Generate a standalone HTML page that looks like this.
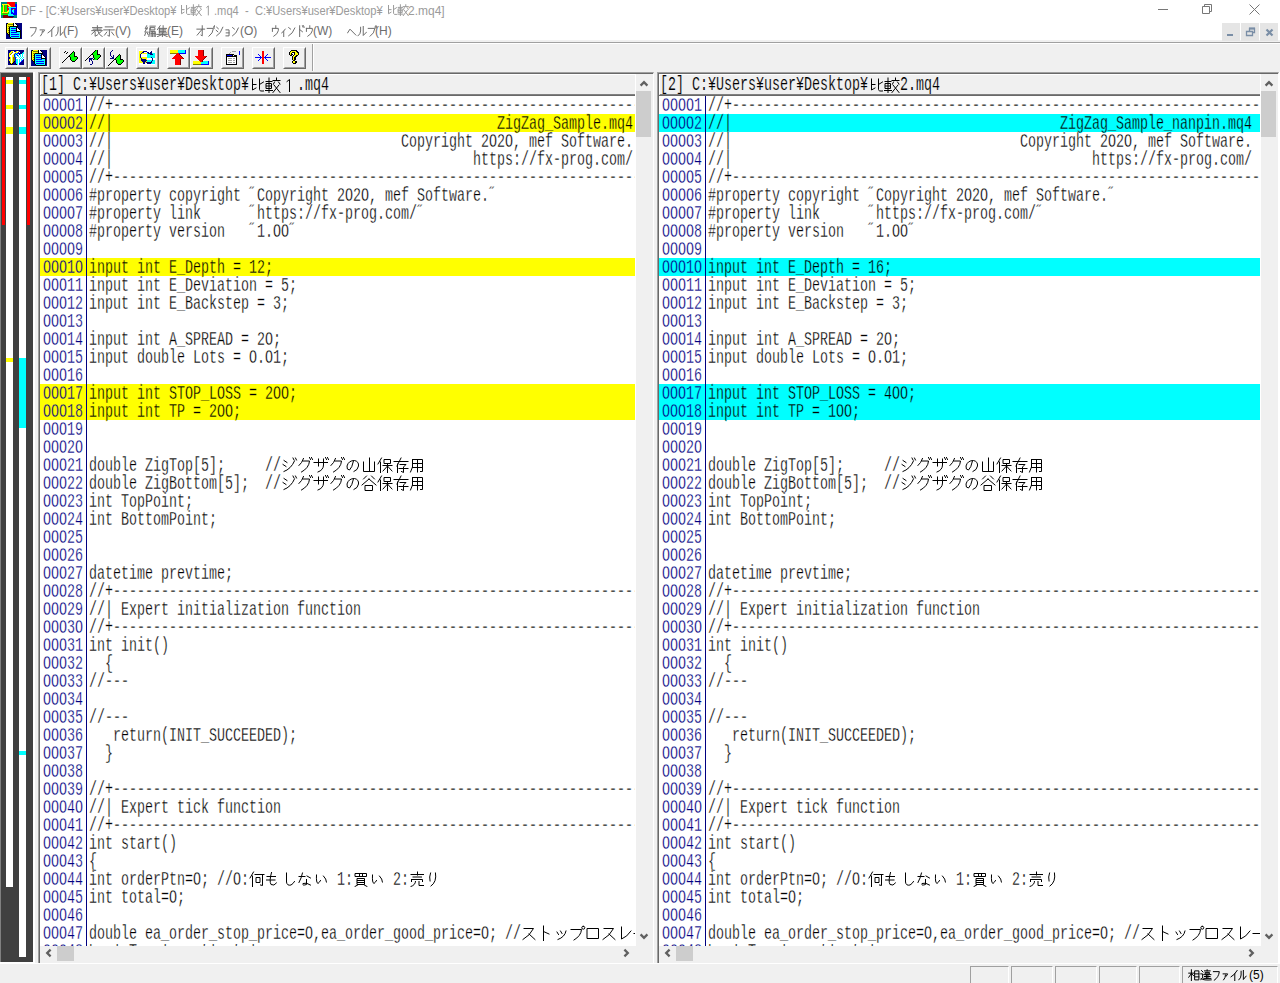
<!DOCTYPE html><html><head><meta charset="utf-8"><title>DF</title><style>
*{box-sizing:border-box}
html,body{margin:0;padding:0;width:1280px;height:983px;overflow:hidden;background:#f0f0f0;position:relative;font-family:"Liberation Sans",sans-serif}
.a{position:absolute;display:block}
.mono{font-family:"Liberation Mono",monospace;font-size:20px;line-height:18px;white-space:pre;transform-origin:0 0;transform:scaleX(0.666667)}
.ui{font-family:"Liberation Sans",sans-serif;font-size:12px;line-height:14px;white-space:pre}
.btn{position:absolute;top:47px;width:23px;height:22px;border-style:solid;border-width:1px;border-color:#fff #696969 #696969 #fff}
.btn:after{content:"";position:absolute;left:0;top:0;right:0;bottom:0;border-style:solid;border-width:1px;border-color:#f0f0f0 #a0a0a0 #a0a0a0 #f0f0f0}
.btn svg{position:absolute;left:2px;top:2px}
svg path{vector-effect:non-scaling-stroke}
</style></head><body>
<div class="a" style="left:0;top:0;width:1280px;height:40px;background:#fff"></div>
<svg class="a" style="left:1px;top:2px" width="16" height="16" viewBox="0 0 16 16" shape-rendering="crispEdges"><rect x="0" y="0" width="6" height="1" fill="#008080"/><rect x="6" y="0" width="8" height="1" fill="#f00"/><rect x="14" y="0" width="2" height="1" fill="#008080"/><rect x="0" y="1" width="6" height="1" fill="#008080"/><rect x="6" y="1" width="8" height="1" fill="#f00"/><rect x="14" y="1" width="2" height="1" fill="#008080"/><rect x="0" y="2" width="1" height="1" fill="#008080"/><rect x="1" y="2" width="7" height="1" fill="#ff0"/><rect x="8" y="2" width="6" height="1" fill="#f00"/><rect x="14" y="2" width="2" height="1" fill="#00f"/><rect x="0" y="3" width="1" height="1" fill="#008080"/><rect x="1" y="3" width="1" height="1" fill="#0f0"/><rect x="2" y="3" width="1" height="1" fill="#ff0"/><rect x="3" y="3" width="1" height="1" fill="#808000"/><rect x="4" y="3" width="2" height="1" fill="#0f0"/><rect x="6" y="3" width="1" height="1" fill="#f00"/><rect x="7" y="3" width="2" height="1" fill="#ff0"/><rect x="9" y="3" width="5" height="1" fill="#f00"/><rect x="14" y="3" width="2" height="1" fill="#00f"/><rect x="0" y="4" width="1" height="1" fill="#008080"/><rect x="1" y="4" width="1" height="1" fill="#0f0"/><rect x="2" y="4" width="1" height="1" fill="#ff0"/><rect x="3" y="4" width="1" height="1" fill="#808000"/><rect x="4" y="4" width="2" height="1" fill="#0f0"/><rect x="6" y="4" width="2" height="1" fill="#f00"/><rect x="8" y="4" width="2" height="1" fill="#ff0"/><rect x="10" y="4" width="4" height="1" fill="#f00"/><rect x="14" y="4" width="2" height="1" fill="#00f"/><rect x="0" y="5" width="2" height="1" fill="#0f0"/><rect x="2" y="5" width="1" height="1" fill="#ff0"/><rect x="3" y="5" width="1" height="1" fill="#808000"/><rect x="4" y="5" width="2" height="1" fill="#0f0"/><rect x="6" y="5" width="1" height="1" fill="#f00"/><rect x="7" y="5" width="8" height="1" fill="#0ff"/><rect x="15" y="5" width="1" height="1" fill="#00f"/><rect x="0" y="6" width="2" height="1" fill="#0f0"/><rect x="2" y="6" width="1" height="1" fill="#ff0"/><rect x="3" y="6" width="1" height="1" fill="#808000"/><rect x="4" y="6" width="2" height="1" fill="#0f0"/><rect x="6" y="6" width="2" height="1" fill="#f00"/><rect x="8" y="6" width="2" height="1" fill="#0ff"/><rect x="10" y="6" width="6" height="1" fill="#00f"/><rect x="0" y="7" width="2" height="1" fill="#0f0"/><rect x="2" y="7" width="1" height="1" fill="#ff0"/><rect x="3" y="7" width="1" height="1" fill="#808000"/><rect x="4" y="7" width="2" height="1" fill="#0f0"/><rect x="6" y="7" width="2" height="1" fill="#f00"/><rect x="8" y="7" width="2" height="1" fill="#0ff"/><rect x="10" y="7" width="1" height="1" fill="#00f"/><rect x="11" y="7" width="1" height="1" fill="#f00"/><rect x="12" y="7" width="1" height="1" fill="#0ff"/><rect x="13" y="7" width="1" height="1" fill="#f00"/><rect x="14" y="7" width="2" height="1" fill="#00f"/><rect x="0" y="8" width="2" height="1" fill="#0f0"/><rect x="2" y="8" width="1" height="1" fill="#ff0"/><rect x="3" y="8" width="1" height="1" fill="#808000"/><rect x="4" y="8" width="2" height="1" fill="#0f0"/><rect x="6" y="8" width="1" height="1" fill="#f00"/><rect x="7" y="8" width="1" height="1" fill="#ff0"/><rect x="8" y="8" width="2" height="1" fill="#0ff"/><rect x="10" y="8" width="1" height="1" fill="#00f"/><rect x="11" y="8" width="2" height="1" fill="#0ff"/><rect x="13" y="8" width="3" height="1" fill="#00f"/><rect x="0" y="9" width="2" height="1" fill="#0f0"/><rect x="2" y="9" width="1" height="1" fill="#ff0"/><rect x="3" y="9" width="1" height="1" fill="#808000"/><rect x="4" y="9" width="2" height="1" fill="#0f0"/><rect x="6" y="9" width="2" height="1" fill="#ff0"/><rect x="8" y="9" width="2" height="1" fill="#0ff"/><rect x="10" y="9" width="1" height="1" fill="#00f"/><rect x="11" y="9" width="2" height="1" fill="#0ff"/><rect x="13" y="9" width="3" height="1" fill="#00f"/><rect x="0" y="10" width="1" height="1" fill="#0f0"/><rect x="1" y="10" width="6" height="1" fill="#ff0"/><rect x="7" y="10" width="1" height="1" fill="#0f0"/><rect x="8" y="10" width="2" height="1" fill="#0ff"/><rect x="10" y="10" width="2" height="1" fill="#00f"/><rect x="12" y="10" width="1" height="1" fill="#0ff"/><rect x="13" y="10" width="3" height="1" fill="#00f"/><rect x="0" y="11" width="2" height="1" fill="#0f0"/><rect x="2" y="11" width="5" height="1" fill="#808000"/><rect x="7" y="11" width="1" height="1" fill="#0f0"/><rect x="8" y="11" width="2" height="1" fill="#0ff"/><rect x="10" y="11" width="6" height="1" fill="#00f"/><rect x="0" y="12" width="7" height="1" fill="#0f0"/><rect x="7" y="12" width="5" height="1" fill="#0ff"/><rect x="12" y="12" width="4" height="1" fill="#00f"/><rect x="0" y="13" width="2" height="1" fill="#008080"/><rect x="2" y="13" width="5" height="1" fill="#800000"/><rect x="7" y="13" width="6" height="1" fill="#0ff"/><rect x="13" y="13" width="3" height="1" fill="#008080"/><rect x="0" y="14" width="2" height="1" fill="#008080"/><rect x="2" y="14" width="6" height="1" fill="#800000"/><rect x="8" y="14" width="5" height="1" fill="#000080"/><rect x="13" y="14" width="3" height="1" fill="#008080"/><rect x="0" y="15" width="2" height="1" fill="#008080"/><rect x="2" y="15" width="10" height="1" fill="#800000"/><rect x="12" y="15" width="4" height="1" fill="#008080"/></svg>
<div class="a ui" style="left:21px;top:4px;color:#9b9b9b;transform:scaleX(0.929);transform-origin:0 0">DF - [C:¥Users¥user¥Desktop¥</div>
<svg class="a" style="left:178.5px;top:4px;" width="23.0" height="12" viewBox="0 0 32 16" preserveAspectRatio="none"><g fill="none" stroke="#9b9b9b" stroke-width="1" stroke-linecap="square" vector-effect="non-scaling-stroke"><path transform="translate(0 0)" d="M3.5 2V13L7 11M3.5 7.5H7M10.5 2V12.5Q10.5 14.5 14.5 14M10.5 7.5L14.5 5"/><path transform="translate(16 0)" d="M4 1V15.5M1 4.5H7M1.5 6.5H6.5V11.5H1.5ZM1.5 9H6.5M0.5 13.5H7.5M11.5 1V3M8 3.5H15M9.5 5L8.5 7M13.5 5L15 7M9 8L15 15.5M14 8L8 15.5"/></g></svg>
<svg class="a" style="left:203px;top:4px;" width="10" height="12" viewBox="0 0 16 16" preserveAspectRatio="none"><g fill="none" stroke="#9b9b9b" stroke-width="1" stroke-linecap="square" vector-effect="non-scaling-stroke"><path transform="translate(0 0)" d="M6 4.5L8.5 2.5V14.5"/></g></svg>
<div class="a ui" style="left:213.7px;top:4px;color:#9b9b9b;transform:scaleX(0.930);transform-origin:0 0">.mq4  -  C:¥Users¥user¥Desktop¥</div>
<svg class="a" style="left:385.5px;top:4px;" width="23.0" height="12" viewBox="0 0 32 16" preserveAspectRatio="none"><g fill="none" stroke="#9b9b9b" stroke-width="1" stroke-linecap="square" vector-effect="non-scaling-stroke"><path transform="translate(0 0)" d="M3.5 2V13L7 11M3.5 7.5H7M10.5 2V12.5Q10.5 14.5 14.5 14M10.5 7.5L14.5 5"/><path transform="translate(16 0)" d="M4 1V15.5M1 4.5H7M1.5 6.5H6.5V11.5H1.5ZM1.5 9H6.5M0.5 13.5H7.5M11.5 1V3M8 3.5H15M9.5 5L8.5 7M13.5 5L15 7M9 8L15 15.5M14 8L8 15.5"/></g></svg>
<div class="a ui" style="left:408px;top:4px;color:#9b9b9b">2.mq4]</div>
<div class="a" style="left:1158px;top:9px;width:10px;height:1px;background:#777"></div>
<svg class="a" style="left:1202px;top:4px" width="11" height="10" viewBox="0 0 11 10"><path d="M0.5 2.5h7v7h-7z M2.5 2.5v-2h7v7h-2" fill="none" stroke="#777" stroke-width="1"/></svg>
<svg class="a" style="left:1249px;top:4px" width="11" height="11" viewBox="0 0 11 11"><path d="M0.5 0.5L10.5 10.5M10.5 0.5L0.5 10.5" fill="none" stroke="#777" stroke-width="1"/></svg>
<svg class="a" style="left:6px;top:23px" width="16" height="16" viewBox="0 0 16 16" shape-rendering="crispEdges"><rect x="0" y="0" width="1" height="1" fill="#000080"/><rect x="1" y="0" width="1" height="1" fill="#000"/><rect x="2" y="0" width="5" height="1" fill="#ff0"/><rect x="7" y="0" width="1" height="1" fill="#000"/><rect x="8" y="0" width="1" height="1" fill="#fff"/><rect x="9" y="0" width="1" height="1" fill="#000"/><rect x="10" y="0" width="6" height="1" fill="#000080"/><rect x="0" y="1" width="1" height="1" fill="#000"/><rect x="1" y="1" width="1" height="1" fill="#ff0"/><rect x="2" y="1" width="5" height="1" fill="#808000"/><rect x="7" y="1" width="1" height="1" fill="#000"/><rect x="8" y="1" width="2" height="1" fill="#fff"/><rect x="10" y="1" width="1" height="1" fill="#000"/><rect x="11" y="1" width="5" height="1" fill="#000080"/><rect x="0" y="2" width="1" height="1" fill="#000"/><rect x="1" y="2" width="6" height="1" fill="#ff0"/><rect x="7" y="2" width="1" height="1" fill="#000"/><rect x="8" y="2" width="3" height="1" fill="#fff"/><rect x="11" y="2" width="1" height="1" fill="#000"/><rect x="12" y="2" width="4" height="1" fill="#000080"/><rect x="0" y="3" width="1" height="1" fill="#000"/><rect x="1" y="3" width="1" height="1" fill="#ff0"/><rect x="2" y="3" width="2" height="1" fill="#808000"/><rect x="4" y="3" width="8" height="1" fill="#000"/><rect x="12" y="3" width="4" height="1" fill="#000080"/><rect x="0" y="4" width="1" height="1" fill="#000"/><rect x="1" y="4" width="2" height="1" fill="#ff0"/><rect x="3" y="4" width="1" height="1" fill="#000"/><rect x="4" y="4" width="6" height="1" fill="#0ff"/><rect x="10" y="4" width="1" height="1" fill="#000"/><rect x="11" y="4" width="5" height="1" fill="#000080"/><rect x="0" y="5" width="1" height="1" fill="#000"/><rect x="1" y="5" width="1" height="1" fill="#ff0"/><rect x="2" y="5" width="1" height="1" fill="#808000"/><rect x="3" y="5" width="1" height="1" fill="#000"/><rect x="4" y="5" width="1" height="1" fill="#0ff"/><rect x="5" y="5" width="5" height="1" fill="#00f"/><rect x="10" y="5" width="1" height="1" fill="#000"/><rect x="11" y="5" width="1" height="1" fill="#fff"/><rect x="12" y="5" width="1" height="1" fill="#000"/><rect x="13" y="5" width="3" height="1" fill="#000080"/><rect x="0" y="6" width="1" height="1" fill="#000"/><rect x="1" y="6" width="2" height="1" fill="#ff0"/><rect x="3" y="6" width="1" height="1" fill="#000"/><rect x="4" y="6" width="6" height="1" fill="#0ff"/><rect x="10" y="6" width="1" height="1" fill="#000"/><rect x="11" y="6" width="2" height="1" fill="#fff"/><rect x="13" y="6" width="1" height="1" fill="#000"/><rect x="14" y="6" width="2" height="1" fill="#000080"/><rect x="0" y="7" width="1" height="1" fill="#000"/><rect x="1" y="7" width="1" height="1" fill="#ff0"/><rect x="2" y="7" width="1" height="1" fill="#808000"/><rect x="3" y="7" width="1" height="1" fill="#000"/><rect x="4" y="7" width="1" height="1" fill="#0ff"/><rect x="5" y="7" width="5" height="1" fill="#00f"/><rect x="10" y="7" width="1" height="1" fill="#000"/><rect x="11" y="7" width="3" height="1" fill="#fff"/><rect x="14" y="7" width="1" height="1" fill="#000"/><rect x="15" y="7" width="1" height="1" fill="#000080"/><rect x="0" y="8" width="1" height="1" fill="#000"/><rect x="1" y="8" width="2" height="1" fill="#ff0"/><rect x="3" y="8" width="1" height="1" fill="#000"/><rect x="4" y="8" width="6" height="1" fill="#0ff"/><rect x="10" y="8" width="5" height="1" fill="#000"/><rect x="15" y="8" width="1" height="1" fill="#000080"/><rect x="0" y="9" width="1" height="1" fill="#000"/><rect x="1" y="9" width="1" height="1" fill="#ff0"/><rect x="2" y="9" width="1" height="1" fill="#808000"/><rect x="3" y="9" width="1" height="1" fill="#000"/><rect x="4" y="9" width="1" height="1" fill="#0ff"/><rect x="5" y="9" width="6" height="1" fill="#00f"/><rect x="11" y="9" width="3" height="1" fill="#0ff"/><rect x="14" y="9" width="1" height="1" fill="#000"/><rect x="15" y="9" width="1" height="1" fill="#000080"/><rect x="0" y="10" width="1" height="1" fill="#000080"/><rect x="1" y="10" width="1" height="1" fill="#000"/><rect x="2" y="10" width="1" height="1" fill="#ff0"/><rect x="3" y="10" width="1" height="1" fill="#000"/><rect x="4" y="10" width="10" height="1" fill="#0ff"/><rect x="14" y="10" width="1" height="1" fill="#000"/><rect x="15" y="10" width="1" height="1" fill="#000080"/><rect x="0" y="11" width="2" height="1" fill="#000080"/><rect x="2" y="11" width="2" height="1" fill="#000"/><rect x="4" y="11" width="1" height="1" fill="#0ff"/><rect x="5" y="11" width="8" height="1" fill="#00f"/><rect x="13" y="11" width="1" height="1" fill="#0ff"/><rect x="14" y="11" width="1" height="1" fill="#000"/><rect x="15" y="11" width="1" height="1" fill="#000080"/><rect x="0" y="12" width="3" height="1" fill="#000080"/><rect x="3" y="12" width="1" height="1" fill="#000"/><rect x="4" y="12" width="10" height="1" fill="#0ff"/><rect x="14" y="12" width="1" height="1" fill="#000"/><rect x="15" y="12" width="1" height="1" fill="#000080"/><rect x="0" y="13" width="3" height="1" fill="#000080"/><rect x="3" y="13" width="1" height="1" fill="#000"/><rect x="4" y="13" width="1" height="1" fill="#0ff"/><rect x="5" y="13" width="8" height="1" fill="#00f"/><rect x="13" y="13" width="1" height="1" fill="#0ff"/><rect x="14" y="13" width="1" height="1" fill="#000"/><rect x="15" y="13" width="1" height="1" fill="#000080"/><rect x="0" y="14" width="4" height="1" fill="#000080"/><rect x="4" y="14" width="1" height="1" fill="#000"/><rect x="5" y="14" width="9" height="1" fill="#0ff"/><rect x="14" y="14" width="1" height="1" fill="#000"/><rect x="15" y="14" width="1" height="1" fill="#000080"/><rect x="0" y="15" width="5" height="1" fill="#000080"/><rect x="5" y="15" width="9" height="1" fill="#000"/><rect x="14" y="15" width="2" height="1" fill="#000080"/></svg>
<svg class="a" style="left:29px;top:25px;" width="9" height="12" viewBox="0 0 16 16" preserveAspectRatio="none"><g fill="none" stroke="#6d6d6d" stroke-width="1" stroke-linecap="square" vector-effect="non-scaling-stroke"><path transform="translate(0 0)" d="M2.5 3.5H13Q12 11 4 15"/></g></svg>
<svg class="a" style="left:38px;top:25px;" width="8.5" height="12" viewBox="0 0 16 16" preserveAspectRatio="none"><g fill="none" stroke="#6d6d6d" stroke-width="1" stroke-linecap="square" vector-effect="non-scaling-stroke"><path transform="translate(0 0)" d="M4 6.5H12.5L10 9.5M8.5 8Q8.5 12 5 14.5"/></g></svg>
<svg class="a" style="left:46.5px;top:25px;" width="8.5" height="12" viewBox="0 0 16 16" preserveAspectRatio="none"><g fill="none" stroke="#6d6d6d" stroke-width="1" stroke-linecap="square" vector-effect="non-scaling-stroke"><path transform="translate(0 0)" d="M13.5 2Q8.5 8 2 10.5M9 6.5V15.5"/></g></svg>
<svg class="a" style="left:55.0px;top:25px;" width="9" height="12" viewBox="0 0 16 16" preserveAspectRatio="none"><g fill="none" stroke="#6d6d6d" stroke-width="1" stroke-linecap="square" vector-effect="non-scaling-stroke"><path transform="translate(0 0)" d="M5.5 3V8Q5.5 12 1.5 14.5M9.5 2V14L14.5 9.5"/></g></svg>
<div class="a ui" style="left:63px;top:24px;color:#6d6d6d">(F)</div>
<svg class="a" style="left:91px;top:25px;" width="12" height="12" viewBox="0 0 16 16" preserveAspectRatio="none"><g fill="none" stroke="#6d6d6d" stroke-width="1" stroke-linecap="square" vector-effect="non-scaling-stroke"><path transform="translate(0 0)" d="M8.5 1V7M2 3.5H14.5M3 5.5H13.5M1 7.5H15M6 7.5L1 12M5.5 9.5V15L9 13M9 8Q10 13 15 15.5M13.5 9L10.5 11"/></g></svg>
<svg class="a" style="left:103px;top:25px;" width="12" height="12" viewBox="0 0 16 16" preserveAspectRatio="none"><g fill="none" stroke="#6d6d6d" stroke-width="1" stroke-linecap="square" vector-effect="non-scaling-stroke"><path transform="translate(0 0)" d="M3 2.5H13M1 6.5H15M8.5 6.5V15L6.5 14M5 9.5L2 13.5M11.5 9.5L14.5 13.5"/></g></svg>
<div class="a ui" style="left:115px;top:24px;color:#6d6d6d">(V)</div>
<svg class="a" style="left:144px;top:25px;" width="12" height="12" viewBox="0 0 16 16" preserveAspectRatio="none"><g fill="none" stroke="#6d6d6d" stroke-width="1" stroke-linecap="square" vector-effect="non-scaling-stroke"><path transform="translate(0 0)" d="M3.5 1L1.5 5H4.5M4.5 3L1 9.5H5.5M2 11L1 14M4.5 11L5.5 13M8 1.5H15M8.5 3.5H14.5V6.5H8.5ZM8.5 3.5L6.5 15.5M9.5 8.5H15V15.5M9.5 8.5V15.5M11.5 8.5V15.5M13.5 8.5V15.5M9.5 11.5H15"/></g></svg>
<svg class="a" style="left:156px;top:25px;" width="12" height="12" viewBox="0 0 16 16" preserveAspectRatio="none"><g fill="none" stroke="#6d6d6d" stroke-width="1" stroke-linecap="square" vector-effect="non-scaling-stroke"><path transform="translate(0 0)" d="M5.5 1L2 6M4.5 4V10.5M4.5 4.5H14M4.5 6.5H13M4.5 8.5H13M4.5 10.5H14M9.5 1V10.5M1 12.5H15M8.5 10.5V15.5M8.5 12.5L2 15.5M8.5 12.5L15 15.5"/></g></svg>
<div class="a ui" style="left:167px;top:24px;color:#6d6d6d">(E)</div>
<svg class="a" style="left:196px;top:25px;" width="9.5" height="12" viewBox="0 0 16 16" preserveAspectRatio="none"><g fill="none" stroke="#6d6d6d" stroke-width="1" stroke-linecap="square" vector-effect="non-scaling-stroke"><path transform="translate(0 0)" d="M1.5 5.5H14.5M10.5 1V14.5L8.5 13.5M10.5 5.5L2 13.5"/></g></svg>
<svg class="a" style="left:205.5px;top:25px;" width="9.5" height="12" viewBox="0 0 16 16" preserveAspectRatio="none"><g fill="none" stroke="#6d6d6d" stroke-width="1" stroke-linecap="square" vector-effect="non-scaling-stroke"><path transform="translate(0 0)" d="M2 4.5H12.5Q12 11 5 15M14.3 1.2A1.5 1.5 0 1 0 14.3 4.2A1.5 1.5 0 1 0 14.3 1.2"/></g></svg>
<svg class="a" style="left:215.0px;top:25px;" width="9" height="12" viewBox="0 0 16 16" preserveAspectRatio="none"><g fill="none" stroke="#6d6d6d" stroke-width="1" stroke-linecap="square" vector-effect="non-scaling-stroke"><path transform="translate(0 0)" d="M3 3L6 5M2 7L5 9M3 14.5Q10 12 14 3"/></g></svg>
<svg class="a" style="left:224.0px;top:25px;" width="7" height="12" viewBox="0 0 16 16" preserveAspectRatio="none"><g fill="none" stroke="#6d6d6d" stroke-width="1" stroke-linecap="square" vector-effect="non-scaling-stroke"><path transform="translate(0 0)" d="M4.5 6.5H11.5V14.5H4.5M5 10.5H11.5"/></g></svg>
<svg class="a" style="left:231.0px;top:25px;" width="8.5" height="12" viewBox="0 0 16 16" preserveAspectRatio="none"><g fill="none" stroke="#6d6d6d" stroke-width="1" stroke-linecap="square" vector-effect="non-scaling-stroke"><path transform="translate(0 0)" d="M3 3.5L6.5 5.5M3 14.5Q10 12 14 4"/></g></svg>
<div class="a ui" style="left:240px;top:24px;color:#6d6d6d">(O)</div>
<svg class="a" style="left:271px;top:25px;" width="9" height="12" viewBox="0 0 16 16" preserveAspectRatio="none"><g fill="none" stroke="#6d6d6d" stroke-width="1" stroke-linecap="square" vector-effect="non-scaling-stroke"><path transform="translate(0 0)" d="M8.5 1V4M2.5 4.5H13V7.5Q12 12 5 15M2.5 4.5V8.5"/></g></svg>
<svg class="a" style="left:280px;top:25px;" width="7" height="12" viewBox="0 0 16 16" preserveAspectRatio="none"><g fill="none" stroke="#6d6d6d" stroke-width="1" stroke-linecap="square" vector-effect="non-scaling-stroke"><path transform="translate(0 0)" d="M12 5.5Q8 9 4 10.5M8.5 8.5V15.5"/></g></svg>
<svg class="a" style="left:287px;top:25px;" width="9" height="12" viewBox="0 0 16 16" preserveAspectRatio="none"><g fill="none" stroke="#6d6d6d" stroke-width="1" stroke-linecap="square" vector-effect="non-scaling-stroke"><path transform="translate(0 0)" d="M3 3.5L6.5 5.5M3 14.5Q10 12 14 4"/></g></svg>
<svg class="a" style="left:296px;top:25px;" width="9" height="12" viewBox="0 0 16 16" preserveAspectRatio="none"><g fill="none" stroke="#6d6d6d" stroke-width="1" stroke-linecap="square" vector-effect="non-scaling-stroke"><path transform="translate(0 0)" d="M6.5 1V15.5M6.5 6L11.5 9M11.5 1L12.5 3M13.5 1L14.5 3"/></g></svg>
<svg class="a" style="left:305px;top:25px;" width="9" height="12" viewBox="0 0 16 16" preserveAspectRatio="none"><g fill="none" stroke="#6d6d6d" stroke-width="1" stroke-linecap="square" vector-effect="non-scaling-stroke"><path transform="translate(0 0)" d="M8.5 1V4M2.5 4.5H13V7.5Q12 12 5 15M2.5 4.5V8.5"/></g></svg>
<div class="a ui" style="left:313px;top:24px;color:#6d6d6d">(W)</div>
<svg class="a" style="left:347px;top:25px;" width="9.5" height="12" viewBox="0 0 16 16" preserveAspectRatio="none"><g fill="none" stroke="#6d6d6d" stroke-width="1" stroke-linecap="square" vector-effect="non-scaling-stroke"><path transform="translate(0 0)" d="M1 10.5L5 5.5L15 13.5"/></g></svg>
<svg class="a" style="left:356.5px;top:25px;" width="10.5" height="12" viewBox="0 0 16 16" preserveAspectRatio="none"><g fill="none" stroke="#6d6d6d" stroke-width="1" stroke-linecap="square" vector-effect="non-scaling-stroke"><path transform="translate(0 0)" d="M5.5 3V8Q5.5 12 1.5 14.5M9.5 2V14L14.5 9.5"/></g></svg>
<svg class="a" style="left:367.0px;top:25px;" width="10" height="12" viewBox="0 0 16 16" preserveAspectRatio="none"><g fill="none" stroke="#6d6d6d" stroke-width="1" stroke-linecap="square" vector-effect="non-scaling-stroke"><path transform="translate(0 0)" d="M2 4.5H12.5Q12 11 5 15M14.3 1.2A1.5 1.5 0 1 0 14.3 4.2A1.5 1.5 0 1 0 14.3 1.2"/></g></svg>
<div class="a ui" style="left:375px;top:24px;color:#6d6d6d">(H)</div>
<svg class="a" style="left:1222px;top:23px;background:#e5e5e5" width="18" height="18" viewBox="0 0 18 18"><path d="M5 12H11" stroke="#7a8ea6" stroke-width="2"/></svg>
<svg class="a" style="left:1241px;top:23px;background:#e5e5e5" width="18" height="18" viewBox="0 0 18 18"><path d="M5.5 8.5h6v4h-6z" fill="none" stroke="#7a8ea6" stroke-width="1.3"/><path d="M8.5 8v-2.5h5v4h-1.5" fill="none" stroke="#7a8ea6" stroke-width="1.3"/><path d="M8 5.5h6" stroke="#7a8ea6" stroke-width="2"/></svg>
<svg class="a" style="left:1260px;top:23px;background:#e5e5e5" width="18" height="18" viewBox="0 0 18 18"><path d="M6.5 6.5l6 6M12.5 6.5l-6 6" stroke="#7a8ea6" stroke-width="2.2"/></svg>
<div class="a" style="left:0;top:42px;width:1280px;height:1px;background:#a0a0a0"></div>
<div class="a" style="left:0;top:43px;width:1280px;height:1px;background:#fff"></div>
<div class="btn" style="left:5px"><svg width="16" height="16" viewBox="0 0 16 16" shape-rendering="crispEdges" style="z-index:1"><rect x="0" y="0" width="16" height="1" fill="#000080"/><rect x="0" y="1" width="3" height="1" fill="#000080"/><rect x="3" y="1" width="2" height="1" fill="#ff0"/><rect x="5" y="1" width="1" height="1" fill="#fff"/><rect x="6" y="1" width="2" height="1" fill="#000080"/><rect x="8" y="1" width="1" height="1" fill="#ff0"/><rect x="9" y="1" width="1" height="1" fill="#fff"/><rect x="10" y="1" width="1" height="1" fill="#ff0"/><rect x="11" y="1" width="5" height="1" fill="#000080"/><rect x="0" y="2" width="2" height="1" fill="#000080"/><rect x="2" y="2" width="2" height="1" fill="#ff0"/><rect x="4" y="2" width="1" height="1" fill="#808000"/><rect x="5" y="2" width="2" height="1" fill="#fff"/><rect x="7" y="2" width="3" height="1" fill="#ff0"/><rect x="10" y="2" width="1" height="1" fill="#00f"/><rect x="11" y="2" width="1" height="1" fill="#fff"/><rect x="12" y="2" width="3" height="1" fill="#000080"/><rect x="15" y="2" width="1" height="1" fill="#0ff"/><rect x="0" y="3" width="1" height="1" fill="#000080"/><rect x="1" y="3" width="2" height="1" fill="#ff0"/><rect x="3" y="3" width="1" height="1" fill="#808000"/><rect x="4" y="3" width="2" height="1" fill="#fff"/><rect x="6" y="3" width="1" height="1" fill="#ff0"/><rect x="7" y="3" width="1" height="1" fill="#00f"/><rect x="8" y="3" width="1" height="1" fill="#0ff"/><rect x="9" y="3" width="2" height="1" fill="#00f"/><rect x="11" y="3" width="3" height="1" fill="#000080"/><rect x="14" y="3" width="2" height="1" fill="#0ff"/><rect x="0" y="4" width="1" height="1" fill="#000080"/><rect x="1" y="4" width="1" height="1" fill="#ff0"/><rect x="2" y="4" width="1" height="1" fill="#808000"/><rect x="3" y="4" width="2" height="1" fill="#fff"/><rect x="5" y="4" width="1" height="1" fill="#ff0"/><rect x="6" y="4" width="1" height="1" fill="#00f"/><rect x="7" y="4" width="1" height="1" fill="#0ff"/><rect x="8" y="4" width="1" height="1" fill="#00f"/><rect x="9" y="4" width="1" height="1" fill="#0ff"/><rect x="10" y="4" width="1" height="1" fill="#fff"/><rect x="11" y="4" width="1" height="1" fill="#000080"/><rect x="12" y="4" width="1" height="1" fill="#0ff"/><rect x="13" y="4" width="1" height="1" fill="#fff"/><rect x="14" y="4" width="1" height="1" fill="#0ff"/><rect x="15" y="4" width="1" height="1" fill="#fff"/><rect x="0" y="5" width="1" height="1" fill="#000080"/><rect x="1" y="5" width="1" height="1" fill="#ff0"/><rect x="2" y="5" width="2" height="1" fill="#fff"/><rect x="4" y="5" width="2" height="1" fill="#ff0"/><rect x="6" y="5" width="1" height="1" fill="#00f"/><rect x="7" y="5" width="1" height="1" fill="#0ff"/><rect x="8" y="5" width="1" height="1" fill="#fff"/><rect x="9" y="5" width="1" height="1" fill="#00f"/><rect x="10" y="5" width="1" height="1" fill="#0ff"/><rect x="11" y="5" width="1" height="1" fill="#fff"/><rect x="12" y="5" width="1" height="1" fill="#0ff"/><rect x="13" y="5" width="1" height="1" fill="#fff"/><rect x="14" y="5" width="1" height="1" fill="#0ff"/><rect x="15" y="5" width="1" height="1" fill="#fff"/><rect x="0" y="6" width="1" height="1" fill="#000080"/><rect x="1" y="6" width="1" height="1" fill="#ff0"/><rect x="2" y="6" width="2" height="1" fill="#fff"/><rect x="4" y="6" width="2" height="1" fill="#ff0"/><rect x="6" y="6" width="1" height="1" fill="#00f"/><rect x="7" y="6" width="1" height="1" fill="#0ff"/><rect x="8" y="6" width="2" height="1" fill="#fff"/><rect x="10" y="6" width="1" height="1" fill="#0ff"/><rect x="11" y="6" width="1" height="1" fill="#fff"/><rect x="12" y="6" width="1" height="1" fill="#0ff"/><rect x="13" y="6" width="1" height="1" fill="#fff"/><rect x="14" y="6" width="1" height="1" fill="#0ff"/><rect x="15" y="6" width="1" height="1" fill="#fff"/><rect x="0" y="7" width="2" height="1" fill="#000080"/><rect x="2" y="7" width="1" height="1" fill="#ff0"/><rect x="3" y="7" width="1" height="1" fill="#fff"/><rect x="4" y="7" width="1" height="1" fill="#ff0"/><rect x="5" y="7" width="2" height="1" fill="#808000"/><rect x="7" y="7" width="1" height="1" fill="#00f"/><rect x="8" y="7" width="1" height="1" fill="#0ff"/><rect x="9" y="7" width="2" height="1" fill="#fff"/><rect x="11" y="7" width="1" height="1" fill="#0ff"/><rect x="12" y="7" width="1" height="1" fill="#fff"/><rect x="13" y="7" width="1" height="1" fill="#0ff"/><rect x="14" y="7" width="1" height="1" fill="#fff"/><rect x="15" y="7" width="1" height="1" fill="#0ff"/><rect x="0" y="8" width="2" height="1" fill="#000080"/><rect x="2" y="8" width="1" height="1" fill="#ff0"/><rect x="3" y="8" width="1" height="1" fill="#fff"/><rect x="4" y="8" width="1" height="1" fill="#ff0"/><rect x="5" y="8" width="2" height="1" fill="#808000"/><rect x="7" y="8" width="1" height="1" fill="#00f"/><rect x="8" y="8" width="4" height="1" fill="#fff"/><rect x="12" y="8" width="1" height="1" fill="#0ff"/><rect x="13" y="8" width="1" height="1" fill="#fff"/><rect x="14" y="8" width="1" height="1" fill="#0ff"/><rect x="15" y="8" width="1" height="1" fill="#fff"/><rect x="0" y="9" width="1" height="1" fill="#000080"/><rect x="1" y="9" width="2" height="1" fill="#ff0"/><rect x="3" y="9" width="1" height="1" fill="#fff"/><rect x="4" y="9" width="1" height="1" fill="#ff0"/><rect x="5" y="9" width="2" height="1" fill="#808000"/><rect x="7" y="9" width="1" height="1" fill="#00f"/><rect x="8" y="9" width="2" height="1" fill="#0ff"/><rect x="10" y="9" width="1" height="1" fill="#fff"/><rect x="11" y="9" width="1" height="1" fill="#0ff"/><rect x="12" y="9" width="1" height="1" fill="#fff"/><rect x="13" y="9" width="1" height="1" fill="#0ff"/><rect x="14" y="9" width="1" height="1" fill="#fff"/><rect x="15" y="9" width="1" height="1" fill="#00f"/><rect x="0" y="10" width="1" height="1" fill="#000080"/><rect x="1" y="10" width="2" height="1" fill="#ff0"/><rect x="3" y="10" width="1" height="1" fill="#fff"/><rect x="4" y="10" width="1" height="1" fill="#ff0"/><rect x="5" y="10" width="2" height="1" fill="#808000"/><rect x="7" y="10" width="1" height="1" fill="#00f"/><rect x="8" y="10" width="2" height="1" fill="#0ff"/><rect x="10" y="10" width="1" height="1" fill="#fff"/><rect x="11" y="10" width="1" height="1" fill="#0ff"/><rect x="12" y="10" width="1" height="1" fill="#fff"/><rect x="13" y="10" width="1" height="1" fill="#0ff"/><rect x="14" y="10" width="1" height="1" fill="#00f"/><rect x="15" y="10" width="1" height="1" fill="#000080"/><rect x="0" y="11" width="2" height="1" fill="#000080"/><rect x="2" y="11" width="1" height="1" fill="#ff0"/><rect x="3" y="11" width="1" height="1" fill="#fff"/><rect x="4" y="11" width="1" height="1" fill="#ff0"/><rect x="5" y="11" width="1" height="1" fill="#808000"/><rect x="6" y="11" width="1" height="1" fill="#000"/><rect x="7" y="11" width="1" height="1" fill="#00f"/><rect x="8" y="11" width="2" height="1" fill="#0ff"/><rect x="10" y="11" width="1" height="1" fill="#fff"/><rect x="11" y="11" width="1" height="1" fill="#0ff"/><rect x="12" y="11" width="1" height="1" fill="#fff"/><rect x="13" y="11" width="1" height="1" fill="#00f"/><rect x="14" y="11" width="2" height="1" fill="#000080"/><rect x="0" y="12" width="1" height="1" fill="#000080"/><rect x="1" y="12" width="1" height="1" fill="#000"/><rect x="2" y="12" width="1" height="1" fill="#ff0"/><rect x="3" y="12" width="1" height="1" fill="#fff"/><rect x="4" y="12" width="1" height="1" fill="#ff0"/><rect x="5" y="12" width="1" height="1" fill="#000"/><rect x="6" y="12" width="1" height="1" fill="#000080"/><rect x="7" y="12" width="1" height="1" fill="#00f"/><rect x="8" y="12" width="2" height="1" fill="#0ff"/><rect x="10" y="12" width="1" height="1" fill="#fff"/><rect x="11" y="12" width="1" height="1" fill="#0ff"/><rect x="12" y="12" width="1" height="1" fill="#00f"/><rect x="13" y="12" width="3" height="1" fill="#000080"/><rect x="0" y="13" width="2" height="1" fill="#000080"/><rect x="2" y="13" width="1" height="1" fill="#000"/><rect x="3" y="13" width="1" height="1" fill="#ff0"/><rect x="4" y="13" width="1" height="1" fill="#000"/><rect x="5" y="13" width="2" height="1" fill="#000080"/><rect x="7" y="13" width="1" height="1" fill="#000"/><rect x="8" y="13" width="2" height="1" fill="#0ff"/><rect x="10" y="13" width="1" height="1" fill="#fff"/><rect x="11" y="13" width="1" height="1" fill="#00f"/><rect x="12" y="13" width="4" height="1" fill="#000080"/><rect x="0" y="14" width="3" height="1" fill="#000080"/><rect x="3" y="14" width="1" height="1" fill="#000"/><rect x="4" y="14" width="4" height="1" fill="#000080"/><rect x="8" y="14" width="1" height="1" fill="#000"/><rect x="9" y="14" width="1" height="1" fill="#0ff"/><rect x="10" y="14" width="1" height="1" fill="#fff"/><rect x="11" y="14" width="1" height="1" fill="#00f"/><rect x="12" y="14" width="4" height="1" fill="#000080"/></svg></div>
<div class="btn" style="left:28px"><svg width="16" height="16" viewBox="0 0 16 16" shape-rendering="crispEdges" style="z-index:1"><rect x="0" y="0" width="1" height="1" fill="#000080"/><rect x="1" y="0" width="1" height="1" fill="#000"/><rect x="2" y="0" width="5" height="1" fill="#ff0"/><rect x="7" y="0" width="1" height="1" fill="#000"/><rect x="8" y="0" width="1" height="1" fill="#fff"/><rect x="9" y="0" width="1" height="1" fill="#000"/><rect x="10" y="0" width="6" height="1" fill="#000080"/><rect x="0" y="1" width="1" height="1" fill="#000"/><rect x="1" y="1" width="1" height="1" fill="#ff0"/><rect x="2" y="1" width="5" height="1" fill="#808000"/><rect x="7" y="1" width="1" height="1" fill="#000"/><rect x="8" y="1" width="2" height="1" fill="#fff"/><rect x="10" y="1" width="1" height="1" fill="#000"/><rect x="11" y="1" width="5" height="1" fill="#000080"/><rect x="0" y="2" width="1" height="1" fill="#000"/><rect x="1" y="2" width="6" height="1" fill="#ff0"/><rect x="7" y="2" width="1" height="1" fill="#000"/><rect x="8" y="2" width="3" height="1" fill="#fff"/><rect x="11" y="2" width="1" height="1" fill="#000"/><rect x="12" y="2" width="4" height="1" fill="#000080"/><rect x="0" y="3" width="1" height="1" fill="#000"/><rect x="1" y="3" width="1" height="1" fill="#ff0"/><rect x="2" y="3" width="2" height="1" fill="#808000"/><rect x="4" y="3" width="8" height="1" fill="#000"/><rect x="12" y="3" width="4" height="1" fill="#000080"/><rect x="0" y="4" width="1" height="1" fill="#000"/><rect x="1" y="4" width="2" height="1" fill="#ff0"/><rect x="3" y="4" width="1" height="1" fill="#000"/><rect x="4" y="4" width="6" height="1" fill="#0ff"/><rect x="10" y="4" width="1" height="1" fill="#000"/><rect x="11" y="4" width="5" height="1" fill="#000080"/><rect x="0" y="5" width="1" height="1" fill="#000"/><rect x="1" y="5" width="1" height="1" fill="#ff0"/><rect x="2" y="5" width="1" height="1" fill="#808000"/><rect x="3" y="5" width="1" height="1" fill="#000"/><rect x="4" y="5" width="1" height="1" fill="#0ff"/><rect x="5" y="5" width="5" height="1" fill="#00f"/><rect x="10" y="5" width="1" height="1" fill="#000"/><rect x="11" y="5" width="1" height="1" fill="#fff"/><rect x="12" y="5" width="1" height="1" fill="#000"/><rect x="13" y="5" width="3" height="1" fill="#000080"/><rect x="0" y="6" width="1" height="1" fill="#000"/><rect x="1" y="6" width="2" height="1" fill="#ff0"/><rect x="3" y="6" width="1" height="1" fill="#000"/><rect x="4" y="6" width="6" height="1" fill="#0ff"/><rect x="10" y="6" width="1" height="1" fill="#000"/><rect x="11" y="6" width="2" height="1" fill="#fff"/><rect x="13" y="6" width="1" height="1" fill="#000"/><rect x="14" y="6" width="2" height="1" fill="#000080"/><rect x="0" y="7" width="1" height="1" fill="#000"/><rect x="1" y="7" width="1" height="1" fill="#ff0"/><rect x="2" y="7" width="1" height="1" fill="#808000"/><rect x="3" y="7" width="1" height="1" fill="#000"/><rect x="4" y="7" width="1" height="1" fill="#0ff"/><rect x="5" y="7" width="5" height="1" fill="#00f"/><rect x="10" y="7" width="1" height="1" fill="#000"/><rect x="11" y="7" width="3" height="1" fill="#fff"/><rect x="14" y="7" width="1" height="1" fill="#000"/><rect x="15" y="7" width="1" height="1" fill="#000080"/><rect x="0" y="8" width="1" height="1" fill="#000"/><rect x="1" y="8" width="2" height="1" fill="#ff0"/><rect x="3" y="8" width="1" height="1" fill="#000"/><rect x="4" y="8" width="6" height="1" fill="#0ff"/><rect x="10" y="8" width="5" height="1" fill="#000"/><rect x="15" y="8" width="1" height="1" fill="#000080"/><rect x="0" y="9" width="1" height="1" fill="#000"/><rect x="1" y="9" width="1" height="1" fill="#ff0"/><rect x="2" y="9" width="1" height="1" fill="#808000"/><rect x="3" y="9" width="1" height="1" fill="#000"/><rect x="4" y="9" width="1" height="1" fill="#0ff"/><rect x="5" y="9" width="6" height="1" fill="#00f"/><rect x="11" y="9" width="3" height="1" fill="#0ff"/><rect x="14" y="9" width="1" height="1" fill="#000"/><rect x="15" y="9" width="1" height="1" fill="#000080"/><rect x="0" y="10" width="1" height="1" fill="#000080"/><rect x="1" y="10" width="1" height="1" fill="#000"/><rect x="2" y="10" width="1" height="1" fill="#ff0"/><rect x="3" y="10" width="1" height="1" fill="#000"/><rect x="4" y="10" width="10" height="1" fill="#0ff"/><rect x="14" y="10" width="1" height="1" fill="#000"/><rect x="15" y="10" width="1" height="1" fill="#000080"/><rect x="0" y="11" width="2" height="1" fill="#000080"/><rect x="2" y="11" width="2" height="1" fill="#000"/><rect x="4" y="11" width="1" height="1" fill="#0ff"/><rect x="5" y="11" width="8" height="1" fill="#00f"/><rect x="13" y="11" width="1" height="1" fill="#0ff"/><rect x="14" y="11" width="1" height="1" fill="#000"/><rect x="15" y="11" width="1" height="1" fill="#000080"/><rect x="0" y="12" width="3" height="1" fill="#000080"/><rect x="3" y="12" width="1" height="1" fill="#000"/><rect x="4" y="12" width="10" height="1" fill="#0ff"/><rect x="14" y="12" width="1" height="1" fill="#000"/><rect x="15" y="12" width="1" height="1" fill="#000080"/><rect x="0" y="13" width="3" height="1" fill="#000080"/><rect x="3" y="13" width="1" height="1" fill="#000"/><rect x="4" y="13" width="1" height="1" fill="#0ff"/><rect x="5" y="13" width="8" height="1" fill="#00f"/><rect x="13" y="13" width="1" height="1" fill="#0ff"/><rect x="14" y="13" width="1" height="1" fill="#000"/><rect x="15" y="13" width="1" height="1" fill="#000080"/><rect x="0" y="14" width="4" height="1" fill="#000080"/><rect x="4" y="14" width="1" height="1" fill="#000"/><rect x="5" y="14" width="9" height="1" fill="#0ff"/><rect x="14" y="14" width="1" height="1" fill="#000"/><rect x="15" y="14" width="1" height="1" fill="#000080"/><rect x="0" y="15" width="5" height="1" fill="#000080"/><rect x="5" y="15" width="9" height="1" fill="#000"/><rect x="14" y="15" width="2" height="1" fill="#000080"/></svg></div>
<div class="btn" style="left:59px"><svg width="16" height="16" viewBox="0 0 16 16" shape-rendering="crispEdges" style="z-index:1"><rect x="3" y="1" width="1" height="1" fill="#000"/><rect x="11" y="1" width="1" height="1" fill="#000"/><rect x="2" y="2" width="1" height="1" fill="#000"/><rect x="5" y="2" width="1" height="1" fill="#000"/><rect x="10" y="2" width="1" height="1" fill="#000"/><rect x="11" y="2" width="1" height="1" fill="#0f0"/><rect x="12" y="2" width="1" height="1" fill="#000"/><rect x="4" y="3" width="1" height="1" fill="#000"/><rect x="9" y="3" width="1" height="1" fill="#000"/><rect x="10" y="3" width="2" height="1" fill="#0f0"/><rect x="12" y="3" width="1" height="1" fill="#000"/><rect x="8" y="4" width="1" height="1" fill="#000"/><rect x="9" y="4" width="3" height="1" fill="#0f0"/><rect x="12" y="4" width="1" height="1" fill="#000"/><rect x="7" y="5" width="1" height="1" fill="#000"/><rect x="8" y="5" width="4" height="1" fill="#0f0"/><rect x="12" y="5" width="1" height="1" fill="#000"/><rect x="6" y="6" width="2" height="1" fill="#000"/><rect x="8" y="6" width="4" height="1" fill="#0f0"/><rect x="12" y="6" width="3" height="1" fill="#000"/><rect x="5" y="7" width="1" height="1" fill="#000"/><rect x="8" y="7" width="1" height="1" fill="#000"/><rect x="9" y="7" width="6" height="1" fill="#0f0"/><rect x="15" y="7" width="1" height="1" fill="#000"/><rect x="4" y="8" width="1" height="1" fill="#000"/><rect x="8" y="8" width="1" height="1" fill="#000"/><rect x="9" y="8" width="6" height="1" fill="#0f0"/><rect x="15" y="8" width="1" height="1" fill="#000"/><rect x="3" y="9" width="1" height="1" fill="#000"/><rect x="8" y="9" width="1" height="1" fill="#000"/><rect x="9" y="9" width="5" height="1" fill="#0f0"/><rect x="14" y="9" width="1" height="1" fill="#000"/><rect x="2" y="10" width="1" height="1" fill="#000"/><rect x="9" y="10" width="1" height="1" fill="#000"/><rect x="10" y="10" width="3" height="1" fill="#0f0"/><rect x="13" y="10" width="1" height="1" fill="#000"/><rect x="1" y="11" width="1" height="1" fill="#000"/><rect x="10" y="11" width="3" height="1" fill="#000"/><rect x="0" y="12" width="1" height="1" fill="#000"/></svg></div>
<div class="btn" style="left:82px"><svg width="16" height="16" viewBox="0 0 16 16" shape-rendering="crispEdges" style="z-index:1"><rect x="10" y="0" width="1" height="1" fill="#000"/><rect x="11" y="0" width="1" height="1" fill="#0f0"/><rect x="12" y="0" width="1" height="1" fill="#000"/><rect x="9" y="1" width="1" height="1" fill="#000"/><rect x="10" y="1" width="2" height="1" fill="#0f0"/><rect x="12" y="1" width="1" height="1" fill="#000"/><rect x="8" y="2" width="1" height="1" fill="#000"/><rect x="9" y="2" width="3" height="1" fill="#0f0"/><rect x="12" y="2" width="1" height="1" fill="#000"/><rect x="7" y="3" width="1" height="1" fill="#000"/><rect x="8" y="3" width="4" height="1" fill="#0f0"/><rect x="12" y="3" width="1" height="1" fill="#000"/><rect x="6" y="4" width="2" height="1" fill="#000"/><rect x="8" y="4" width="4" height="1" fill="#0f0"/><rect x="12" y="4" width="3" height="1" fill="#000"/><rect x="5" y="5" width="1" height="1" fill="#000"/><rect x="8" y="5" width="1" height="1" fill="#000"/><rect x="9" y="5" width="6" height="1" fill="#0f0"/><rect x="15" y="5" width="1" height="1" fill="#000"/><rect x="4" y="6" width="1" height="1" fill="#000"/><rect x="8" y="6" width="1" height="1" fill="#000"/><rect x="9" y="6" width="6" height="1" fill="#0f0"/><rect x="15" y="6" width="1" height="1" fill="#000"/><rect x="3" y="7" width="1" height="1" fill="#000"/><rect x="8" y="7" width="1" height="1" fill="#000"/><rect x="9" y="7" width="5" height="1" fill="#0f0"/><rect x="14" y="7" width="1" height="1" fill="#000"/><rect x="2" y="8" width="1" height="1" fill="#000"/><rect x="4" y="8" width="4" height="1" fill="#000080"/><rect x="9" y="8" width="1" height="1" fill="#000"/><rect x="10" y="8" width="3" height="1" fill="#0f0"/><rect x="13" y="8" width="1" height="1" fill="#000"/><rect x="1" y="9" width="1" height="1" fill="#000"/><rect x="4" y="9" width="3" height="1" fill="#000080"/><rect x="8" y="9" width="1" height="1" fill="#000"/><rect x="9" y="9" width="3" height="1" fill="#0f0"/><rect x="12" y="9" width="1" height="1" fill="#000"/><rect x="0" y="10" width="1" height="1" fill="#000"/><rect x="4" y="10" width="1" height="1" fill="#000080"/><rect x="6" y="10" width="1" height="1" fill="#000080"/><rect x="4" y="11" width="1" height="1" fill="#000080"/><rect x="7" y="11" width="1" height="1" fill="#000080"/><rect x="7" y="12" width="1" height="1" fill="#000080"/><rect x="7" y="13" width="1" height="1" fill="#000080"/><rect x="5" y="14" width="2" height="1" fill="#000080"/></svg></div>
<div class="btn" style="left:105px"><svg width="16" height="16" viewBox="0 0 16 16" shape-rendering="crispEdges" style="z-index:1"><rect x="4" y="0" width="1" height="1" fill="#000080"/><rect x="3" y="1" width="1" height="1" fill="#000080"/><rect x="2" y="2" width="1" height="1" fill="#000080"/><rect x="2" y="3" width="1" height="1" fill="#000080"/><rect x="2" y="4" width="1" height="1" fill="#000080"/><rect x="11" y="4" width="1" height="1" fill="#000"/><rect x="2" y="5" width="1" height="1" fill="#000080"/><rect x="5" y="5" width="1" height="1" fill="#000080"/><rect x="10" y="5" width="1" height="1" fill="#000"/><rect x="11" y="5" width="1" height="1" fill="#0f0"/><rect x="12" y="5" width="1" height="1" fill="#000"/><rect x="3" y="6" width="1" height="1" fill="#000080"/><rect x="5" y="6" width="1" height="1" fill="#000080"/><rect x="9" y="6" width="1" height="1" fill="#000"/><rect x="10" y="6" width="2" height="1" fill="#0f0"/><rect x="12" y="6" width="1" height="1" fill="#000"/><rect x="4" y="7" width="2" height="1" fill="#000080"/><rect x="8" y="7" width="1" height="1" fill="#000"/><rect x="9" y="7" width="3" height="1" fill="#0f0"/><rect x="12" y="7" width="1" height="1" fill="#000"/><rect x="2" y="8" width="4" height="1" fill="#000080"/><rect x="7" y="8" width="1" height="1" fill="#000"/><rect x="8" y="8" width="4" height="1" fill="#0f0"/><rect x="12" y="8" width="1" height="1" fill="#000"/><rect x="6" y="9" width="2" height="1" fill="#000"/><rect x="8" y="9" width="4" height="1" fill="#0f0"/><rect x="12" y="9" width="3" height="1" fill="#000"/><rect x="5" y="10" width="1" height="1" fill="#000"/><rect x="8" y="10" width="1" height="1" fill="#000"/><rect x="9" y="10" width="6" height="1" fill="#0f0"/><rect x="15" y="10" width="1" height="1" fill="#000"/><rect x="4" y="11" width="1" height="1" fill="#000"/><rect x="8" y="11" width="1" height="1" fill="#000"/><rect x="9" y="11" width="6" height="1" fill="#0f0"/><rect x="15" y="11" width="1" height="1" fill="#000"/><rect x="3" y="12" width="1" height="1" fill="#000"/><rect x="8" y="12" width="1" height="1" fill="#000"/><rect x="9" y="12" width="5" height="1" fill="#0f0"/><rect x="14" y="12" width="1" height="1" fill="#000"/><rect x="2" y="13" width="1" height="1" fill="#000"/><rect x="9" y="13" width="1" height="1" fill="#000"/><rect x="10" y="13" width="3" height="1" fill="#0f0"/><rect x="13" y="13" width="1" height="1" fill="#000"/><rect x="1" y="14" width="1" height="1" fill="#000"/><rect x="10" y="14" width="3" height="1" fill="#000"/><rect x="0" y="15" width="1" height="1" fill="#000"/></svg></div>
<div class="btn" style="left:136px"><svg width="16" height="16" viewBox="0 0 16 16" shape-rendering="crispEdges" style="z-index:1"><rect x="0" y="0" width="16" height="1" fill="#fff"/><rect x="0" y="1" width="4" height="1" fill="#ff0"/><rect x="4" y="1" width="4" height="1" fill="#000080"/><rect x="8" y="1" width="4" height="1" fill="#fff"/><rect x="12" y="1" width="1" height="1" fill="#000080"/><rect x="13" y="1" width="3" height="1" fill="#fff"/><rect x="0" y="2" width="3" height="1" fill="#ff0"/><rect x="3" y="2" width="2" height="1" fill="#000080"/><rect x="5" y="2" width="3" height="1" fill="#fff"/><rect x="8" y="2" width="2" height="1" fill="#000080"/><rect x="10" y="2" width="1" height="1" fill="#fff"/><rect x="11" y="2" width="2" height="1" fill="#000080"/><rect x="13" y="2" width="3" height="1" fill="#fff"/><rect x="0" y="3" width="2" height="1" fill="#ff0"/><rect x="2" y="3" width="1" height="1" fill="#000080"/><rect x="3" y="3" width="5" height="1" fill="#ff0"/><rect x="8" y="3" width="1" height="1" fill="#0ff"/><rect x="9" y="3" width="4" height="1" fill="#000080"/><rect x="13" y="3" width="3" height="1" fill="#0ff"/><rect x="0" y="4" width="1" height="1" fill="#ff0"/><rect x="1" y="4" width="1" height="1" fill="#000080"/><rect x="2" y="4" width="6" height="1" fill="#fff"/><rect x="8" y="4" width="3" height="1" fill="#0ff"/><rect x="11" y="4" width="3" height="1" fill="#000080"/><rect x="14" y="4" width="2" height="1" fill="#0ff"/><rect x="0" y="5" width="1" height="1" fill="#ff0"/><rect x="1" y="5" width="1" height="1" fill="#000080"/><rect x="2" y="5" width="6" height="1" fill="#fff"/><rect x="8" y="5" width="8" height="1" fill="#0ff"/><rect x="0" y="6" width="1" height="1" fill="#ff0"/><rect x="1" y="6" width="1" height="1" fill="#000080"/><rect x="2" y="6" width="6" height="1" fill="#fff"/><rect x="8" y="6" width="8" height="1" fill="#0ff"/><rect x="0" y="7" width="1" height="1" fill="#ff0"/><rect x="1" y="7" width="1" height="1" fill="#000080"/><rect x="2" y="7" width="6" height="1" fill="#ff0"/><rect x="8" y="7" width="4" height="1" fill="#0ff"/><rect x="12" y="7" width="1" height="1" fill="#000080"/><rect x="13" y="7" width="3" height="1" fill="#0ff"/><rect x="0" y="8" width="2" height="1" fill="#ff0"/><rect x="2" y="8" width="1" height="1" fill="#000080"/><rect x="3" y="8" width="5" height="1" fill="#ff0"/><rect x="8" y="8" width="5" height="1" fill="#fff"/><rect x="13" y="8" width="1" height="1" fill="#000080"/><rect x="14" y="8" width="2" height="1" fill="#fff"/><rect x="0" y="9" width="2" height="1" fill="#ff0"/><rect x="2" y="9" width="5" height="1" fill="#000080"/><rect x="7" y="9" width="1" height="1" fill="#ff0"/><rect x="8" y="9" width="5" height="1" fill="#fff"/><rect x="13" y="9" width="1" height="1" fill="#000080"/><rect x="14" y="9" width="2" height="1" fill="#fff"/><rect x="0" y="10" width="2" height="1" fill="#ff0"/><rect x="2" y="10" width="6" height="1" fill="#000080"/><rect x="8" y="10" width="5" height="1" fill="#0ff"/><rect x="13" y="10" width="1" height="1" fill="#000080"/><rect x="14" y="10" width="2" height="1" fill="#0ff"/><rect x="0" y="11" width="3" height="1" fill="#ff0"/><rect x="3" y="11" width="4" height="1" fill="#000080"/><rect x="7" y="11" width="1" height="1" fill="#ff0"/><rect x="8" y="11" width="4" height="1" fill="#0ff"/><rect x="12" y="11" width="1" height="1" fill="#000080"/><rect x="13" y="11" width="3" height="1" fill="#0ff"/><rect x="0" y="12" width="4" height="1" fill="#ff0"/><rect x="4" y="12" width="2" height="1" fill="#000080"/><rect x="6" y="12" width="1" height="1" fill="#ff0"/><rect x="7" y="12" width="6" height="1" fill="#000080"/><rect x="13" y="12" width="3" height="1" fill="#0ff"/><rect x="0" y="13" width="4" height="1" fill="#fff"/><rect x="4" y="13" width="2" height="1" fill="#000080"/><rect x="6" y="13" width="2" height="1" fill="#fff"/><rect x="8" y="13" width="4" height="1" fill="#000080"/><rect x="12" y="13" width="4" height="1" fill="#0ff"/><rect x="0" y="14" width="16" height="1" fill="#fff"/></svg></div>
<div class="btn" style="left:167px"><svg width="16" height="16" viewBox="0 0 16 16" shape-rendering="crispEdges" style="z-index:1"><rect x="0" y="0" width="8" height="1" fill="#ff0"/><rect x="8" y="0" width="7" height="1" fill="#0ff"/><rect x="15" y="0" width="1" height="1" fill="#00f"/><rect x="0" y="1" width="8" height="1" fill="#ff0"/><rect x="8" y="1" width="7" height="1" fill="#0ff"/><rect x="15" y="1" width="1" height="1" fill="#00f"/><rect x="0" y="2" width="8" height="1" fill="#ff0"/><rect x="8" y="2" width="7" height="1" fill="#0ff"/><rect x="15" y="2" width="1" height="1" fill="#00f"/><rect x="0" y="3" width="7" height="1" fill="#808000"/><rect x="7" y="3" width="2" height="1" fill="#f00"/><rect x="9" y="3" width="7" height="1" fill="#00f"/><rect x="6" y="4" width="3" height="1" fill="#f00"/><rect x="9" y="4" width="1" height="1" fill="#800000"/><rect x="5" y="5" width="5" height="1" fill="#f00"/><rect x="10" y="5" width="1" height="1" fill="#800000"/><rect x="4" y="6" width="7" height="1" fill="#f00"/><rect x="11" y="6" width="1" height="1" fill="#800000"/><rect x="3" y="7" width="9" height="1" fill="#f00"/><rect x="12" y="7" width="1" height="1" fill="#800000"/><rect x="2" y="8" width="11" height="1" fill="#f00"/><rect x="13" y="8" width="1" height="1" fill="#800000"/><rect x="5" y="9" width="5" height="1" fill="#f00"/><rect x="10" y="9" width="1" height="1" fill="#800000"/><rect x="5" y="10" width="5" height="1" fill="#f00"/><rect x="10" y="10" width="1" height="1" fill="#800000"/><rect x="5" y="11" width="5" height="1" fill="#f00"/><rect x="10" y="11" width="1" height="1" fill="#800000"/><rect x="5" y="12" width="5" height="1" fill="#f00"/><rect x="10" y="12" width="1" height="1" fill="#800000"/><rect x="5" y="13" width="5" height="1" fill="#f00"/><rect x="10" y="13" width="1" height="1" fill="#800000"/><rect x="5" y="14" width="5" height="1" fill="#f00"/><rect x="10" y="14" width="1" height="1" fill="#800000"/></svg></div>
<div class="btn" style="left:190px"><svg width="16" height="16" viewBox="0 0 16 16" shape-rendering="crispEdges" style="z-index:1"><rect x="5" y="0" width="5" height="1" fill="#f00"/><rect x="10" y="0" width="1" height="1" fill="#800000"/><rect x="5" y="1" width="5" height="1" fill="#f00"/><rect x="10" y="1" width="1" height="1" fill="#800000"/><rect x="5" y="2" width="5" height="1" fill="#f00"/><rect x="10" y="2" width="1" height="1" fill="#800000"/><rect x="5" y="3" width="5" height="1" fill="#f00"/><rect x="10" y="3" width="1" height="1" fill="#800000"/><rect x="5" y="4" width="5" height="1" fill="#f00"/><rect x="10" y="4" width="1" height="1" fill="#800000"/><rect x="5" y="5" width="5" height="1" fill="#f00"/><rect x="10" y="5" width="1" height="1" fill="#800000"/><rect x="2" y="6" width="11" height="1" fill="#f00"/><rect x="13" y="6" width="1" height="1" fill="#800000"/><rect x="3" y="7" width="9" height="1" fill="#f00"/><rect x="12" y="7" width="1" height="1" fill="#800000"/><rect x="4" y="8" width="7" height="1" fill="#f00"/><rect x="11" y="8" width="1" height="1" fill="#800000"/><rect x="5" y="9" width="5" height="1" fill="#f00"/><rect x="10" y="9" width="1" height="1" fill="#800000"/><rect x="6" y="10" width="3" height="1" fill="#f00"/><rect x="9" y="10" width="1" height="1" fill="#800000"/><rect x="0" y="11" width="7" height="1" fill="#ff0"/><rect x="7" y="11" width="2" height="1" fill="#f00"/><rect x="9" y="11" width="1" height="1" fill="#800000"/><rect x="10" y="11" width="5" height="1" fill="#0ff"/><rect x="15" y="11" width="1" height="1" fill="#00f"/><rect x="0" y="12" width="8" height="1" fill="#ff0"/><rect x="8" y="12" width="7" height="1" fill="#0ff"/><rect x="15" y="12" width="1" height="1" fill="#00f"/><rect x="0" y="13" width="8" height="1" fill="#ff0"/><rect x="8" y="13" width="7" height="1" fill="#0ff"/><rect x="15" y="13" width="1" height="1" fill="#00f"/><rect x="0" y="14" width="8" height="1" fill="#808000"/><rect x="8" y="14" width="8" height="1" fill="#00f"/></svg></div>
<div class="btn" style="left:221px"><svg width="16" height="16" viewBox="0 0 16 16" shape-rendering="crispEdges" style="z-index:1"><rect x="8" y="1" width="4" height="1" fill="#a0a0a0"/><rect x="15" y="1" width="1" height="1" fill="#00f"/><rect x="6" y="2" width="1" height="1" fill="#a0a0a0"/><rect x="15" y="2" width="1" height="1" fill="#00f"/><rect x="5" y="3" width="1" height="1" fill="#a0a0a0"/><rect x="15" y="3" width="1" height="1" fill="#00f"/><rect x="2" y="4" width="8" height="1" fill="#000"/><rect x="15" y="4" width="1" height="1" fill="#00f"/><rect x="2" y="5" width="1" height="1" fill="#000"/><rect x="3" y="5" width="5" height="1" fill="#00f"/><rect x="8" y="5" width="1" height="1" fill="#000"/><rect x="10" y="5" width="3" height="1" fill="#000"/><rect x="2" y="6" width="11" height="1" fill="#000"/><rect x="2" y="7" width="1" height="1" fill="#000"/><rect x="3" y="7" width="9" height="1" fill="#fff"/><rect x="12" y="7" width="1" height="1" fill="#000"/><rect x="2" y="8" width="1" height="1" fill="#000"/><rect x="3" y="8" width="1" height="1" fill="#fff"/><rect x="4" y="8" width="4" height="1" fill="#a0a0a0"/><rect x="8" y="8" width="1" height="1" fill="#fff"/><rect x="9" y="8" width="2" height="1" fill="#a0a0a0"/><rect x="11" y="8" width="1" height="1" fill="#fff"/><rect x="12" y="8" width="1" height="1" fill="#000"/><rect x="2" y="9" width="1" height="1" fill="#000"/><rect x="3" y="9" width="9" height="1" fill="#fff"/><rect x="12" y="9" width="1" height="1" fill="#000"/><rect x="2" y="10" width="1" height="1" fill="#000"/><rect x="3" y="10" width="1" height="1" fill="#fff"/><rect x="4" y="10" width="4" height="1" fill="#a0a0a0"/><rect x="8" y="10" width="1" height="1" fill="#fff"/><rect x="9" y="10" width="2" height="1" fill="#a0a0a0"/><rect x="11" y="10" width="1" height="1" fill="#fff"/><rect x="12" y="10" width="1" height="1" fill="#000"/><rect x="2" y="11" width="1" height="1" fill="#000"/><rect x="3" y="11" width="9" height="1" fill="#fff"/><rect x="12" y="11" width="1" height="1" fill="#000"/><rect x="2" y="12" width="1" height="1" fill="#000"/><rect x="3" y="12" width="1" height="1" fill="#fff"/><rect x="4" y="12" width="4" height="1" fill="#a0a0a0"/><rect x="8" y="12" width="1" height="1" fill="#fff"/><rect x="9" y="12" width="2" height="1" fill="#a0a0a0"/><rect x="11" y="12" width="1" height="1" fill="#fff"/><rect x="12" y="12" width="1" height="1" fill="#000"/><rect x="2" y="13" width="1" height="1" fill="#000"/><rect x="3" y="13" width="9" height="1" fill="#fff"/><rect x="12" y="13" width="1" height="1" fill="#000"/><rect x="2" y="14" width="11" height="1" fill="#000"/></svg></div>
<div class="btn" style="left:252px"><svg width="16" height="16" viewBox="0 0 16 16" shape-rendering="crispEdges" style="z-index:1"><rect x="7" y="1" width="2" height="1" fill="#f00"/><rect x="7" y="2" width="2" height="1" fill="#f00"/><rect x="7" y="3" width="2" height="1" fill="#f00"/><rect x="3" y="4" width="1" height="1" fill="#00f"/><rect x="7" y="4" width="2" height="1" fill="#f00"/><rect x="12" y="4" width="1" height="1" fill="#00f"/><rect x="4" y="5" width="1" height="1" fill="#00f"/><rect x="7" y="5" width="2" height="1" fill="#f00"/><rect x="11" y="5" width="1" height="1" fill="#00f"/><rect x="5" y="6" width="1" height="1" fill="#00f"/><rect x="7" y="6" width="2" height="1" fill="#f00"/><rect x="10" y="6" width="1" height="1" fill="#00f"/><rect x="0" y="7" width="7" height="1" fill="#00f"/><rect x="7" y="7" width="2" height="1" fill="#f00"/><rect x="9" y="7" width="7" height="1" fill="#00f"/><rect x="5" y="8" width="1" height="1" fill="#00f"/><rect x="7" y="8" width="2" height="1" fill="#f00"/><rect x="10" y="8" width="1" height="1" fill="#00f"/><rect x="4" y="9" width="1" height="1" fill="#00f"/><rect x="7" y="9" width="2" height="1" fill="#f00"/><rect x="11" y="9" width="1" height="1" fill="#00f"/><rect x="3" y="10" width="1" height="1" fill="#00f"/><rect x="7" y="10" width="2" height="1" fill="#f00"/><rect x="12" y="10" width="1" height="1" fill="#00f"/><rect x="7" y="11" width="2" height="1" fill="#f00"/><rect x="7" y="12" width="2" height="1" fill="#f00"/><rect x="7" y="13" width="2" height="1" fill="#f00"/></svg></div>
<div class="btn" style="left:283px"><svg width="16" height="16" viewBox="0 0 16 16" shape-rendering="crispEdges" style="z-index:1"><rect x="5" y="0" width="6" height="1" fill="#000"/><rect x="4" y="1" width="1" height="1" fill="#000"/><rect x="5" y="1" width="5" height="1" fill="#ff0"/><rect x="10" y="1" width="2" height="1" fill="#000"/><rect x="3" y="2" width="1" height="1" fill="#000"/><rect x="4" y="2" width="2" height="1" fill="#ff0"/><rect x="6" y="2" width="3" height="1" fill="#000"/><rect x="9" y="2" width="2" height="1" fill="#ff0"/><rect x="11" y="2" width="2" height="1" fill="#000"/><rect x="3" y="3" width="1" height="1" fill="#000"/><rect x="4" y="3" width="1" height="1" fill="#ff0"/><rect x="5" y="3" width="1" height="1" fill="#000"/><rect x="6" y="3" width="2" height="1" fill="#fff"/><rect x="8" y="3" width="1" height="1" fill="#000"/><rect x="9" y="3" width="3" height="1" fill="#ff0"/><rect x="12" y="3" width="1" height="1" fill="#000"/><rect x="3" y="4" width="1" height="1" fill="#000"/><rect x="4" y="4" width="1" height="1" fill="#ff0"/><rect x="5" y="4" width="2" height="1" fill="#000"/><rect x="7" y="4" width="1" height="1" fill="#fff"/><rect x="8" y="4" width="1" height="1" fill="#000"/><rect x="9" y="4" width="3" height="1" fill="#ff0"/><rect x="12" y="4" width="1" height="1" fill="#000"/><rect x="4" y="5" width="2" height="1" fill="#000"/><rect x="6" y="5" width="1" height="1" fill="#fff"/><rect x="7" y="5" width="1" height="1" fill="#000"/><rect x="8" y="5" width="2" height="1" fill="#ff0"/><rect x="10" y="5" width="2" height="1" fill="#000"/><rect x="6" y="6" width="1" height="1" fill="#000"/><rect x="7" y="6" width="2" height="1" fill="#ff0"/><rect x="9" y="6" width="2" height="1" fill="#000"/><rect x="6" y="7" width="1" height="1" fill="#000"/><rect x="7" y="7" width="1" height="1" fill="#ff0"/><rect x="8" y="7" width="2" height="1" fill="#000"/><rect x="6" y="8" width="1" height="1" fill="#000"/><rect x="7" y="8" width="1" height="1" fill="#ff0"/><rect x="8" y="8" width="2" height="1" fill="#000"/><rect x="6" y="9" width="1" height="1" fill="#000"/><rect x="7" y="9" width="1" height="1" fill="#ff0"/><rect x="8" y="9" width="2" height="1" fill="#000"/><rect x="7" y="10" width="2" height="1" fill="#000"/><rect x="6" y="11" width="1" height="1" fill="#000"/><rect x="7" y="11" width="2" height="1" fill="#ff0"/><rect x="9" y="11" width="2" height="1" fill="#000"/><rect x="6" y="12" width="1" height="1" fill="#000"/><rect x="7" y="12" width="2" height="1" fill="#ff0"/><rect x="9" y="12" width="2" height="1" fill="#000"/><rect x="7" y="13" width="3" height="1" fill="#000"/></svg></div>
<div class="a" style="left:312px;top:44px;width:1px;height:27px;background:#a0a0a0"></div>
<div class="a" style="left:313px;top:44px;width:1px;height:27px;background:#fff"></div>
<div class="a" style="left:0;top:72px;width:33px;height:890px;background:#404040;border-top:1px solid #a0a0a0;border-left:1px solid #808080"></div>
<div class="a" style="left:33px;top:72px;width:2px;height:892px;background:#fff"></div>
<div class="a" style="left:0;top:962px;width:35px;height:2px;background:#fff"></div>
<div class="a" style="left:6px;top:77px;width:7px;height:810px;background:#fff"></div>
<div class="a" style="left:19px;top:77px;width:7px;height:880px;background:#fff"></div>
<div class="a" style="left:2px;top:77px;width:3px;height:148px;background:#f00"></div>
<div class="a" style="left:27px;top:77px;width:3px;height:148px;background:#f00"></div>
<div class="a" style="left:6px;top:80px;width:7px;height:4px;background:#ff0"></div>
<div class="a" style="left:6px;top:105px;width:7px;height:4px;background:#ff0"></div>
<div class="a" style="left:6px;top:127px;width:7px;height:7px;background:#ff0"></div>
<div class="a" style="left:6px;top:358px;width:7px;height:4px;background:#ff0"></div>
<div class="a" style="left:19px;top:80px;width:7px;height:4px;background:#0ff"></div>
<div class="a" style="left:19px;top:105px;width:7px;height:4px;background:#0ff"></div>
<div class="a" style="left:19px;top:127px;width:7px;height:7px;background:#0ff"></div>
<div class="a" style="left:19px;top:358px;width:7px;height:70px;background:#0ff"></div>
<div class="a" style="left:19px;top:751px;width:7px;height:4px;background:#0ff"></div>
<div class="a" style="left:38px;top:72px;width:616px;height:892px;background:#f0f0f0;border-style:solid;border-width:2px 1px 1px 2px;border-color:#a0a0a0 #fff #fff #a0a0a0"></div>
<div class="a" style="left:39px;top:73px;width:614px;height:1px;background:#696969"></div>
<div class="a" style="left:39px;top:73px;width:1px;height:890px;background:#696969"></div>
<div class="a" style="left:40px;top:74px;width:595px;height:22px;background:#f0f0f0;border-top:1px solid #fff;border-left:1px solid #fff;border-bottom:2px solid #808080"></div>
<div class="a" style="left:40px;top:95px;width:595px;height:1px;background:#696969"></div>
<div class="a" style="left:41px;top:75px;width:595px;height:19px;overflow:hidden"><div class="a mono" style="left:0;top:1px;-webkit-text-stroke:0.15px #f0f0f0">[1] C:¥Users¥user¥Desktop¥      .mq4</div></div>
<svg class="a" style="left:249px;top:77px;" width="48" height="16" viewBox="0 0 48 16" preserveAspectRatio="none"><g fill="none" stroke="#000" stroke-width="1" stroke-linecap="square" vector-effect="non-scaling-stroke"><path transform="translate(0 0)" d="M3.5 2V13L7 11M3.5 7.5H7M10.5 2V12.5Q10.5 14.5 14.5 14M10.5 7.5L14.5 5"/><path transform="translate(16 0)" d="M4 1V15.5M1 4.5H7M1.5 6.5H6.5V11.5H1.5ZM1.5 9H6.5M0.5 13.5H7.5M11.5 1V3M8 3.5H15M9.5 5L8.5 7M13.5 5L15 7M9 8L15 15.5M14 8L8 15.5"/><path transform="translate(32 0)" d="M6 4.5L8.5 2.5V14.5"/></g></svg>
<div class="a" style="left:40px;top:96px;width:596px;height:850px;background:#fff;overflow:hidden">
<div class="a" style="left:0;top:18px;width:595px;height:18px;background:#ff0"></div>
<div class="a" style="left:0;top:162px;width:595px;height:18px;background:#ff0"></div>
<div class="a" style="left:0;top:288px;width:595px;height:36px;background:#ff0"></div>
<div class="a" style="left:46px;top:0;width:1px;height:850px;background:#000080"></div>
<div class="a" style="left:0;top:848px;width:595px;height:2px;overflow:hidden"><div class="a mono" style="left:3px;top:-1px;color:#000080;-webkit-text-stroke:0.3px #fff">OOO48</div><div class="a mono" style="left:49px;top:-1px;color:#000;-webkit-text-stroke:0.3px #fff">bool Trailing_flg=false;</div></div>
<div class="a mono" style="left:3px;top:1px;color:#000080;-webkit-text-stroke:0.3px #fff">OOOO1</div>
<div class="a mono" style="left:49px;top:1px;color:#000;-webkit-text-stroke:0.3px #fff">//+------------------------------------------------------------------+</div>
<div class="a mono" style="left:3px;top:19px;color:#000080;-webkit-text-stroke:0.3px #ff0">OOOO2</div>
<div class="a mono" style="left:49px;top:19px;color:#000;-webkit-text-stroke:0.3px #ff0">//|                                                ZigZag_Sample.mq4 |</div>
<div class="a mono" style="left:3px;top:37px;color:#000080;-webkit-text-stroke:0.3px #fff">OOOO3
OOOO4
OOOO5
OOOO6
OOOO7
OOOO8
OOOO9</div>
<div class="a mono" style="left:49px;top:37px;color:#000;-webkit-text-stroke:0.3px #fff">//|                                    Copyright 2O2O, mef Software. |
//|                                             https://fx-prog.com/ |
//+------------------------------------------------------------------+
#property copyright ˝Copyright 2O2O, mef Software.˝
#property link      ˝https://fx-prog.com/˝
#property version   ˝1.OO˝
</div>
<div class="a mono" style="left:3px;top:163px;color:#000080;-webkit-text-stroke:0.3px #ff0">OOO1O</div>
<div class="a mono" style="left:49px;top:163px;color:#000;-webkit-text-stroke:0.3px #ff0">input int E_Depth = 12;</div>
<div class="a mono" style="left:3px;top:181px;color:#000080;-webkit-text-stroke:0.3px #fff">OOO11
OOO12
OOO13
OOO14
OOO15
OOO16</div>
<div class="a mono" style="left:49px;top:181px;color:#000;-webkit-text-stroke:0.3px #fff">input int E_Deviation = 5;
input int E_Backstep = 3;

input int A_SPREAD = 2O;
input double Lots = O.O1;
</div>
<div class="a mono" style="left:3px;top:289px;color:#000080;-webkit-text-stroke:0.3px #ff0">OOO17
OOO18</div>
<div class="a mono" style="left:49px;top:289px;color:#000;-webkit-text-stroke:0.3px #ff0">input int STOP_LOSS = 2OO;
input int TP = 2OO;</div>
<div class="a mono" style="left:3px;top:325px;color:#000080;-webkit-text-stroke:0.3px #fff">OOO19
OOO2O
OOO21
OOO22
OOO23
OOO24
OOO25
OOO26
OOO27
OOO28
OOO29
OOO3O
OOO31
OOO32
OOO33
OOO34
OOO35
OOO36
OOO37
OOO38
OOO39
OOO4O
OOO41
OOO42
OOO43
OOO44
OOO45
OOO46
OOO47</div>
<div class="a mono" style="left:49px;top:325px;color:#000;-webkit-text-stroke:0.3px #fff">

double ZigTop[5];     //
double ZigBottom[5];  //
int TopPoint;
int BottomPoint;


datetime prevtime;
//+------------------------------------------------------------------+
//| Expert initialization function                                   |
//+------------------------------------------------------------------+
int init()
  {
//---

//---
   return(INIT_SUCCEEDED);
  }

//+------------------------------------------------------------------+
//| Expert tick function                                             |
//+------------------------------------------------------------------+
int start()
{
int orderPtn=O; //O:           1:     2:
int total=O;

double ea_order_stop_price=O,ea_order_good_price=O; //</div>
<svg class="a" style="left:241px;top:361px;" width="144" height="16" viewBox="0 0 144 16" preserveAspectRatio="none"><g fill="none" stroke="#000" stroke-width="1" stroke-linecap="square" vector-effect="non-scaling-stroke"><path transform="translate(0 0)" d="M3 3.5L6 5.5M2 7.5L5 9.5M3 14.5Q10 12 13.5 4M12 1L13 3M14.5 1L15.5 3"/><path transform="translate(16 0)" d="M6.5 1.5Q5 6 2 8.5M6 4H12.5Q12 11 4.5 15M12.5 0.5L13.5 2.5M14.5 0.5L15.5 2.5"/><path transform="translate(32 0)" d="M1 5.5H14.5M5.5 2V9M10.5 2V8Q10.5 13 5 15M12.5 0.5L13.5 2.5M14.5 0.5L15.5 2.5"/><path transform="translate(48 0)" d="M6.5 1.5Q5 6 2 8.5M6 4H12.5Q12 11 4.5 15M12.5 0.5L13.5 2.5M14.5 0.5L15.5 2.5"/><path transform="translate(64 0)" d="M8.5 4Q7 11 4.5 13Q1.5 13 2 9Q3.5 3.5 9.5 3.5Q14 4.5 13.5 9Q13 13 9 14.5"/><path transform="translate(80 0)" d="M8.5 1V14M2.5 5V14.5H13.5V5"/><path transform="translate(96 0)" d="M4.5 1L1 7M3.5 5V15.5M7.5 2.5H13.5V6.5H7.5ZM6 8.5H15M10.5 6.5V15.5M10.5 9L6 14M10.5 9L15 14"/><path transform="translate(112 0)" d="M1 4.5H15M8 1L4 9M4.5 7V15.5M7 7.5H13L10.5 10V15.5L8.5 14.5M6 11.5H15"/><path transform="translate(128 0)" d="M3.5 2.5H13.5V14.5L11.5 14.5M3.5 2.5V10L1.5 15M3.5 6.5H13.5M3.5 10.5H13.5M8.5 2.5V15"/></g></svg>
<svg class="a" style="left:241px;top:379px;" width="144" height="16" viewBox="0 0 144 16" preserveAspectRatio="none"><g fill="none" stroke="#000" stroke-width="1" stroke-linecap="square" vector-effect="non-scaling-stroke"><path transform="translate(0 0)" d="M3 3.5L6 5.5M2 7.5L5 9.5M3 14.5Q10 12 13.5 4M12 1L13 3M14.5 1L15.5 3"/><path transform="translate(16 0)" d="M6.5 1.5Q5 6 2 8.5M6 4H12.5Q12 11 4.5 15M12.5 0.5L13.5 2.5M14.5 0.5L15.5 2.5"/><path transform="translate(32 0)" d="M1 5.5H14.5M5.5 2V9M10.5 2V8Q10.5 13 5 15M12.5 0.5L13.5 2.5M14.5 0.5L15.5 2.5"/><path transform="translate(48 0)" d="M6.5 1.5Q5 6 2 8.5M6 4H12.5Q12 11 4.5 15M12.5 0.5L13.5 2.5M14.5 0.5L15.5 2.5"/><path transform="translate(64 0)" d="M8.5 4Q7 11 4.5 13Q1.5 13 2 9Q3.5 3.5 9.5 3.5Q14 4.5 13.5 9Q13 13 9 14.5"/><path transform="translate(80 0)" d="M5.5 1L2.5 4M10.5 1L13.5 4M8 4L1 10M8 4L15 10M4.5 10.5H11.5V15.5H4.5Z"/><path transform="translate(96 0)" d="M4.5 1L1 7M3.5 5V15.5M7.5 2.5H13.5V6.5H7.5ZM6 8.5H15M10.5 6.5V15.5M10.5 9L6 14M10.5 9L15 14"/><path transform="translate(112 0)" d="M1 4.5H15M8 1L4 9M4.5 7V15.5M7 7.5H13L10.5 10V15.5L8.5 14.5M6 11.5H15"/><path transform="translate(128 0)" d="M3.5 2.5H13.5V14.5L11.5 14.5M3.5 2.5V10L1.5 15M3.5 6.5H13.5M3.5 10.5H13.5M8.5 2.5V15"/></g></svg>
<svg class="a" style="left:209px;top:775px;" width="80" height="16" viewBox="0 0 80 16" preserveAspectRatio="none"><g fill="none" stroke="#000" stroke-width="1" stroke-linecap="square" vector-effect="non-scaling-stroke"><path transform="translate(0 0)" d="M4.5 1L1 7M3.5 5V15.5M6 3.5H15M13.5 3.5V14.5L11.5 14M7.5 6.5H11V11.5H7.5Z"/><path transform="translate(16 0)" d="M6.5 1.5Q4 10 6 13.5Q9 15.5 11.5 12M2 5.5H10.5M1.5 9H10"/><path transform="translate(32 0)" d="M5.5 2V11Q6 15 10 14Q12 13 13.5 10.5"/><path transform="translate(48 0)" d="M2 5.5H8M5.5 2Q4.5 7 2 11.5M10 5L13.5 7M9.5 8.5V13.5Q5 15 6 12.5Q9 11 13.5 14"/><path transform="translate(64 0)" d="M3.5 4Q3 12 5 12.5Q6 12 7.5 9.5M10.5 5Q13.5 8 13.5 11"/></g></svg>
<svg class="a" style="left:313px;top:775px;" width="32" height="16" viewBox="0 0 32 16" preserveAspectRatio="none"><g fill="none" stroke="#000" stroke-width="1" stroke-linecap="square" vector-effect="non-scaling-stroke"><path transform="translate(0 0)" d="M2.5 2.5H13.5V5.5H2.5ZM6.5 2.5V5.5M9.5 2.5V5.5M4.5 7.5H11.5V13.5H4.5ZM4.5 9.5H11.5M4.5 11.5H11.5M5.5 13.5L2 15.5M10.5 13.5L14 15.5"/><path transform="translate(16 0)" d="M3.5 4Q3 12 5 12.5Q6 12 7.5 9.5M10.5 5Q13.5 8 13.5 11"/></g></svg>
<svg class="a" style="left:369px;top:775px;" width="32" height="16" viewBox="0 0 32 16" preserveAspectRatio="none"><g fill="none" stroke="#000" stroke-width="1" stroke-linecap="square" vector-effect="non-scaling-stroke"><path transform="translate(0 0)" d="M8.5 1V4M2 3.5H14.5M4 6H12.5M2.5 8.5H13.5V10.5M2.5 8.5V10.5M6.5 10.5Q6.5 14 2 15.5M10 10.5V14.5H14.5"/><path transform="translate(16 0)" d="M5.5 2Q4 6 5 10M10.5 2Q12 11 6 15"/></g></svg>
<svg class="a" style="left:481px;top:829px;" width="128" height="16" viewBox="0 0 128 16" preserveAspectRatio="none"><g fill="none" stroke="#000" stroke-width="1" stroke-linecap="square" vector-effect="non-scaling-stroke"><path transform="translate(0 0)" d="M3 3.5H12.5Q9 10.5 2 14.5M8 9L14 14.5"/><path transform="translate(16 0)" d="M6.5 1V15.5M6.5 6.5L12 9"/><path transform="translate(32 0)" d="M4 7L5.5 9.5M7.5 6L9 8.5M13 6Q12 12 5 14.5"/><path transform="translate(48 0)" d="M2 4.5H12.5Q12 11 5 15M14.3 1.2A1.5 1.5 0 1 0 14.3 4.2A1.5 1.5 0 1 0 14.3 1.2"/><path transform="translate(64 0)" d="M2.5 3.5H13.5V13.5H2.5Z"/><path transform="translate(80 0)" d="M3 3.5H12.5Q9 10.5 2 14.5M8 9L14 14.5"/><path transform="translate(96 0)" d="M4.5 2V14Q10 12 14 6"/><path transform="translate(112 0)" d="M1 8.5H15"/></g></svg>
</div>
<div class="a" style="left:636px;top:74px;width:17px;height:872px;background:#f0f0f0"></div>
<div class="a" style="left:636px;top:91px;width:15px;height:46px;background:#cdcdcd"></div>
<svg class="a" style="left:639px;top:78px" width="10" height="10" viewBox="0 0 10 10"><path d="M1.6 7.6L5 4.2L8.4 7.6" fill="none" stroke="#606060" stroke-width="2.3"/></svg>
<svg class="a" style="left:639px;top:932px" width="10" height="10" viewBox="0 0 10 10"><path d="M1.6 2.4L5 5.8L8.4 2.4" fill="none" stroke="#606060" stroke-width="2.3"/></svg>
<div class="a" style="left:635px;top:74px;width:1px;height:872px;background:#fff"></div>
<div class="a" style="left:40px;top:946px;width:613px;height:17px;background:#f0f0f0"></div>
<div class="a" style="left:57px;top:946px;width:17px;height:15px;background:#cdcdcd"></div>
<svg class="a" style="left:43px;top:948px" width="10" height="10" viewBox="0 0 10 10"><path d="M7.6 1.6L4.2 5L7.6 8.4" fill="none" stroke="#606060" stroke-width="2.3"/></svg>
<svg class="a" style="left:622px;top:948px" width="10" height="10" viewBox="0 0 10 10"><path d="M2.4 1.6L5.8 5L2.4 8.4" fill="none" stroke="#606060" stroke-width="2.3"/></svg>
<div class="a" style="left:657px;top:72px;width:622px;height:892px;background:#f0f0f0;border-style:solid;border-width:2px 1px 1px 2px;border-color:#a0a0a0 #fff #fff #a0a0a0"></div>
<div class="a" style="left:658px;top:73px;width:620px;height:1px;background:#696969"></div>
<div class="a" style="left:658px;top:73px;width:1px;height:890px;background:#696969"></div>
<div class="a" style="left:659px;top:74px;width:601px;height:22px;background:#f0f0f0;border-top:1px solid #fff;border-left:1px solid #fff;border-bottom:2px solid #808080"></div>
<div class="a" style="left:659px;top:95px;width:601px;height:1px;background:#696969"></div>
<div class="a" style="left:660px;top:75px;width:601px;height:19px;overflow:hidden"><div class="a mono" style="left:0;top:1px;-webkit-text-stroke:0.15px #f0f0f0">[2] C:¥Users¥user¥Desktop¥    2.mq4</div></div>
<svg class="a" style="left:868px;top:77px;" width="32" height="16" viewBox="0 0 32 16" preserveAspectRatio="none"><g fill="none" stroke="#000" stroke-width="1" stroke-linecap="square" vector-effect="non-scaling-stroke"><path transform="translate(0 0)" d="M3.5 2V13L7 11M3.5 7.5H7M10.5 2V12.5Q10.5 14.5 14.5 14M10.5 7.5L14.5 5"/><path transform="translate(16 0)" d="M4 1V15.5M1 4.5H7M1.5 6.5H6.5V11.5H1.5ZM1.5 9H6.5M0.5 13.5H7.5M11.5 1V3M8 3.5H15M9.5 5L8.5 7M13.5 5L15 7M9 8L15 15.5M14 8L8 15.5"/></g></svg>
<div class="a" style="left:659px;top:96px;width:602px;height:850px;background:#fff;overflow:hidden">
<div class="a" style="left:0;top:18px;width:601px;height:18px;background:#0ff"></div>
<div class="a" style="left:0;top:162px;width:601px;height:18px;background:#0ff"></div>
<div class="a" style="left:0;top:288px;width:601px;height:36px;background:#0ff"></div>
<div class="a" style="left:46px;top:0;width:1px;height:850px;background:#000080"></div>
<div class="a" style="left:0;top:848px;width:601px;height:2px;overflow:hidden"><div class="a mono" style="left:3px;top:-1px;color:#000080;-webkit-text-stroke:0.3px #fff">OOO48</div><div class="a mono" style="left:49px;top:-1px;color:#000;-webkit-text-stroke:0.3px #fff">bool Trailing_flg=false;</div></div>
<div class="a mono" style="left:3px;top:1px;color:#000080;-webkit-text-stroke:0.3px #fff">OOOO1</div>
<div class="a mono" style="left:49px;top:1px;color:#000;-webkit-text-stroke:0.3px #fff">//+------------------------------------------------------------------+</div>
<div class="a mono" style="left:3px;top:19px;color:#000080;-webkit-text-stroke:0.3px #0ff">OOOO2</div>
<div class="a mono" style="left:49px;top:19px;color:#000;-webkit-text-stroke:0.3px #0ff">//|                                         ZigZag_Sample_nanpin.mq4 |</div>
<div class="a mono" style="left:3px;top:37px;color:#000080;-webkit-text-stroke:0.3px #fff">OOOO3
OOOO4
OOOO5
OOOO6
OOOO7
OOOO8
OOOO9</div>
<div class="a mono" style="left:49px;top:37px;color:#000;-webkit-text-stroke:0.3px #fff">//|                                    Copyright 2O2O, mef Software. |
//|                                             https://fx-prog.com/ |
//+------------------------------------------------------------------+
#property copyright ˝Copyright 2O2O, mef Software.˝
#property link      ˝https://fx-prog.com/˝
#property version   ˝1.OO˝
</div>
<div class="a mono" style="left:3px;top:163px;color:#000080;-webkit-text-stroke:0.3px #0ff">OOO1O</div>
<div class="a mono" style="left:49px;top:163px;color:#000;-webkit-text-stroke:0.3px #0ff">input int E_Depth = 16;</div>
<div class="a mono" style="left:3px;top:181px;color:#000080;-webkit-text-stroke:0.3px #fff">OOO11
OOO12
OOO13
OOO14
OOO15
OOO16</div>
<div class="a mono" style="left:49px;top:181px;color:#000;-webkit-text-stroke:0.3px #fff">input int E_Deviation = 5;
input int E_Backstep = 3;

input int A_SPREAD = 2O;
input double Lots = O.O1;
</div>
<div class="a mono" style="left:3px;top:289px;color:#000080;-webkit-text-stroke:0.3px #0ff">OOO17
OOO18</div>
<div class="a mono" style="left:49px;top:289px;color:#000;-webkit-text-stroke:0.3px #0ff">input int STOP_LOSS = 4OO;
input int TP = 1OO;</div>
<div class="a mono" style="left:3px;top:325px;color:#000080;-webkit-text-stroke:0.3px #fff">OOO19
OOO2O
OOO21
OOO22
OOO23
OOO24
OOO25
OOO26
OOO27
OOO28
OOO29
OOO3O
OOO31
OOO32
OOO33
OOO34
OOO35
OOO36
OOO37
OOO38
OOO39
OOO4O
OOO41
OOO42
OOO43
OOO44
OOO45
OOO46
OOO47</div>
<div class="a mono" style="left:49px;top:325px;color:#000;-webkit-text-stroke:0.3px #fff">

double ZigTop[5];     //
double ZigBottom[5];  //
int TopPoint;
int BottomPoint;


datetime prevtime;
//+------------------------------------------------------------------+
//| Expert initialization function                                   |
//+------------------------------------------------------------------+
int init()
  {
//---

//---
   return(INIT_SUCCEEDED);
  }

//+------------------------------------------------------------------+
//| Expert tick function                                             |
//+------------------------------------------------------------------+
int start()
{
int orderPtn=O; //O:           1:     2:
int total=O;

double ea_order_stop_price=O,ea_order_good_price=O; //</div>
<svg class="a" style="left:241px;top:361px;" width="144" height="16" viewBox="0 0 144 16" preserveAspectRatio="none"><g fill="none" stroke="#000" stroke-width="1" stroke-linecap="square" vector-effect="non-scaling-stroke"><path transform="translate(0 0)" d="M3 3.5L6 5.5M2 7.5L5 9.5M3 14.5Q10 12 13.5 4M12 1L13 3M14.5 1L15.5 3"/><path transform="translate(16 0)" d="M6.5 1.5Q5 6 2 8.5M6 4H12.5Q12 11 4.5 15M12.5 0.5L13.5 2.5M14.5 0.5L15.5 2.5"/><path transform="translate(32 0)" d="M1 5.5H14.5M5.5 2V9M10.5 2V8Q10.5 13 5 15M12.5 0.5L13.5 2.5M14.5 0.5L15.5 2.5"/><path transform="translate(48 0)" d="M6.5 1.5Q5 6 2 8.5M6 4H12.5Q12 11 4.5 15M12.5 0.5L13.5 2.5M14.5 0.5L15.5 2.5"/><path transform="translate(64 0)" d="M8.5 4Q7 11 4.5 13Q1.5 13 2 9Q3.5 3.5 9.5 3.5Q14 4.5 13.5 9Q13 13 9 14.5"/><path transform="translate(80 0)" d="M8.5 1V14M2.5 5V14.5H13.5V5"/><path transform="translate(96 0)" d="M4.5 1L1 7M3.5 5V15.5M7.5 2.5H13.5V6.5H7.5ZM6 8.5H15M10.5 6.5V15.5M10.5 9L6 14M10.5 9L15 14"/><path transform="translate(112 0)" d="M1 4.5H15M8 1L4 9M4.5 7V15.5M7 7.5H13L10.5 10V15.5L8.5 14.5M6 11.5H15"/><path transform="translate(128 0)" d="M3.5 2.5H13.5V14.5L11.5 14.5M3.5 2.5V10L1.5 15M3.5 6.5H13.5M3.5 10.5H13.5M8.5 2.5V15"/></g></svg>
<svg class="a" style="left:241px;top:379px;" width="144" height="16" viewBox="0 0 144 16" preserveAspectRatio="none"><g fill="none" stroke="#000" stroke-width="1" stroke-linecap="square" vector-effect="non-scaling-stroke"><path transform="translate(0 0)" d="M3 3.5L6 5.5M2 7.5L5 9.5M3 14.5Q10 12 13.5 4M12 1L13 3M14.5 1L15.5 3"/><path transform="translate(16 0)" d="M6.5 1.5Q5 6 2 8.5M6 4H12.5Q12 11 4.5 15M12.5 0.5L13.5 2.5M14.5 0.5L15.5 2.5"/><path transform="translate(32 0)" d="M1 5.5H14.5M5.5 2V9M10.5 2V8Q10.5 13 5 15M12.5 0.5L13.5 2.5M14.5 0.5L15.5 2.5"/><path transform="translate(48 0)" d="M6.5 1.5Q5 6 2 8.5M6 4H12.5Q12 11 4.5 15M12.5 0.5L13.5 2.5M14.5 0.5L15.5 2.5"/><path transform="translate(64 0)" d="M8.5 4Q7 11 4.5 13Q1.5 13 2 9Q3.5 3.5 9.5 3.5Q14 4.5 13.5 9Q13 13 9 14.5"/><path transform="translate(80 0)" d="M5.5 1L2.5 4M10.5 1L13.5 4M8 4L1 10M8 4L15 10M4.5 10.5H11.5V15.5H4.5Z"/><path transform="translate(96 0)" d="M4.5 1L1 7M3.5 5V15.5M7.5 2.5H13.5V6.5H7.5ZM6 8.5H15M10.5 6.5V15.5M10.5 9L6 14M10.5 9L15 14"/><path transform="translate(112 0)" d="M1 4.5H15M8 1L4 9M4.5 7V15.5M7 7.5H13L10.5 10V15.5L8.5 14.5M6 11.5H15"/><path transform="translate(128 0)" d="M3.5 2.5H13.5V14.5L11.5 14.5M3.5 2.5V10L1.5 15M3.5 6.5H13.5M3.5 10.5H13.5M8.5 2.5V15"/></g></svg>
<svg class="a" style="left:209px;top:775px;" width="80" height="16" viewBox="0 0 80 16" preserveAspectRatio="none"><g fill="none" stroke="#000" stroke-width="1" stroke-linecap="square" vector-effect="non-scaling-stroke"><path transform="translate(0 0)" d="M4.5 1L1 7M3.5 5V15.5M6 3.5H15M13.5 3.5V14.5L11.5 14M7.5 6.5H11V11.5H7.5Z"/><path transform="translate(16 0)" d="M6.5 1.5Q4 10 6 13.5Q9 15.5 11.5 12M2 5.5H10.5M1.5 9H10"/><path transform="translate(32 0)" d="M5.5 2V11Q6 15 10 14Q12 13 13.5 10.5"/><path transform="translate(48 0)" d="M2 5.5H8M5.5 2Q4.5 7 2 11.5M10 5L13.5 7M9.5 8.5V13.5Q5 15 6 12.5Q9 11 13.5 14"/><path transform="translate(64 0)" d="M3.5 4Q3 12 5 12.5Q6 12 7.5 9.5M10.5 5Q13.5 8 13.5 11"/></g></svg>
<svg class="a" style="left:313px;top:775px;" width="32" height="16" viewBox="0 0 32 16" preserveAspectRatio="none"><g fill="none" stroke="#000" stroke-width="1" stroke-linecap="square" vector-effect="non-scaling-stroke"><path transform="translate(0 0)" d="M2.5 2.5H13.5V5.5H2.5ZM6.5 2.5V5.5M9.5 2.5V5.5M4.5 7.5H11.5V13.5H4.5ZM4.5 9.5H11.5M4.5 11.5H11.5M5.5 13.5L2 15.5M10.5 13.5L14 15.5"/><path transform="translate(16 0)" d="M3.5 4Q3 12 5 12.5Q6 12 7.5 9.5M10.5 5Q13.5 8 13.5 11"/></g></svg>
<svg class="a" style="left:369px;top:775px;" width="32" height="16" viewBox="0 0 32 16" preserveAspectRatio="none"><g fill="none" stroke="#000" stroke-width="1" stroke-linecap="square" vector-effect="non-scaling-stroke"><path transform="translate(0 0)" d="M8.5 1V4M2 3.5H14.5M4 6H12.5M2.5 8.5H13.5V10.5M2.5 8.5V10.5M6.5 10.5Q6.5 14 2 15.5M10 10.5V14.5H14.5"/><path transform="translate(16 0)" d="M5.5 2Q4 6 5 10M10.5 2Q12 11 6 15"/></g></svg>
<svg class="a" style="left:481px;top:829px;" width="128" height="16" viewBox="0 0 128 16" preserveAspectRatio="none"><g fill="none" stroke="#000" stroke-width="1" stroke-linecap="square" vector-effect="non-scaling-stroke"><path transform="translate(0 0)" d="M3 3.5H12.5Q9 10.5 2 14.5M8 9L14 14.5"/><path transform="translate(16 0)" d="M6.5 1V15.5M6.5 6.5L12 9"/><path transform="translate(32 0)" d="M4 7L5.5 9.5M7.5 6L9 8.5M13 6Q12 12 5 14.5"/><path transform="translate(48 0)" d="M2 4.5H12.5Q12 11 5 15M14.3 1.2A1.5 1.5 0 1 0 14.3 4.2A1.5 1.5 0 1 0 14.3 1.2"/><path transform="translate(64 0)" d="M2.5 3.5H13.5V13.5H2.5Z"/><path transform="translate(80 0)" d="M3 3.5H12.5Q9 10.5 2 14.5M8 9L14 14.5"/><path transform="translate(96 0)" d="M4.5 2V14Q10 12 14 6"/><path transform="translate(112 0)" d="M1 8.5H15"/></g></svg>
</div>
<div class="a" style="left:1261px;top:74px;width:17px;height:872px;background:#f0f0f0"></div>
<div class="a" style="left:1261px;top:91px;width:15px;height:46px;background:#cdcdcd"></div>
<svg class="a" style="left:1264px;top:78px" width="10" height="10" viewBox="0 0 10 10"><path d="M1.6 7.6L5 4.2L8.4 7.6" fill="none" stroke="#606060" stroke-width="2.3"/></svg>
<svg class="a" style="left:1264px;top:932px" width="10" height="10" viewBox="0 0 10 10"><path d="M1.6 2.4L5 5.8L8.4 2.4" fill="none" stroke="#606060" stroke-width="2.3"/></svg>
<div class="a" style="left:1260px;top:74px;width:1px;height:872px;background:#fff"></div>
<div class="a" style="left:659px;top:946px;width:619px;height:17px;background:#f0f0f0"></div>
<div class="a" style="left:676px;top:946px;width:17px;height:15px;background:#cdcdcd"></div>
<svg class="a" style="left:662px;top:948px" width="10" height="10" viewBox="0 0 10 10"><path d="M7.6 1.6L4.2 5L7.6 8.4" fill="none" stroke="#606060" stroke-width="2.3"/></svg>
<svg class="a" style="left:1247px;top:948px" width="10" height="10" viewBox="0 0 10 10"><path d="M2.4 1.6L5.8 5L2.4 8.4" fill="none" stroke="#606060" stroke-width="2.3"/></svg>
<div class="a" style="left:1279px;top:72px;width:1px;height:892px;background:#fff"></div>
<div class="a" style="left:0;top:963px;width:1280px;height:1px;background:#fff"></div>
<div class="a" style="left:970px;top:966px;width:39px;height:18px;border-style:solid;border-width:1px;border-color:#a0a0a0 #fff #fff #a0a0a0"></div>
<div class="a" style="left:1011px;top:966px;width:42px;height:18px;border-style:solid;border-width:1px;border-color:#a0a0a0 #fff #fff #a0a0a0"></div>
<div class="a" style="left:1055px;top:966px;width:42px;height:18px;border-style:solid;border-width:1px;border-color:#a0a0a0 #fff #fff #a0a0a0"></div>
<div class="a" style="left:1099px;top:966px;width:38px;height:18px;border-style:solid;border-width:1px;border-color:#a0a0a0 #fff #fff #a0a0a0"></div>
<div class="a" style="left:1139px;top:966px;width:41px;height:18px;border-style:solid;border-width:1px;border-color:#a0a0a0 #fff #fff #a0a0a0"></div>
<div class="a" style="left:1182px;top:966px;width:96px;height:18px;border-style:solid;border-width:1px;border-color:#a0a0a0 #fff #fff #a0a0a0"></div>
<svg class="a" style="left:1188px;top:969px;" width="24" height="12" viewBox="0 0 32 16" preserveAspectRatio="none"><g fill="none" stroke="#000" stroke-width="1" stroke-linecap="square" vector-effect="non-scaling-stroke"><path transform="translate(0 0)" d="M4.5 1V15.5M1 5.5H7.5M4.5 6L1 11M4.5 6L7.5 9M9.5 2.5H14.5V14.5H9.5ZM9.5 6.5H14.5M9.5 10.5H14.5"/><path transform="translate(16 0)" d="M2 2L4 4M1 6.5H3.5V12L1 14M1.5 13Q5 15.5 15 14.5M9.5 1V2.5M6 2.5H13.5M7.5 4.5H12.5V6.5H7.5ZM5 7.5H14.5M8.5 8V12.5M6 10H13.5M10.5 8V12.5M5 12.5H14.5"/></g></svg>
<svg class="a" style="left:1212px;top:969px;" width="9" height="12" viewBox="0 0 16 16" preserveAspectRatio="none"><g fill="none" stroke="#000" stroke-width="1" stroke-linecap="square" vector-effect="non-scaling-stroke"><path transform="translate(0 0)" d="M2.5 3.5H13Q12 11 4 15"/></g></svg>
<svg class="a" style="left:1221px;top:969px;" width="8.5" height="12" viewBox="0 0 16 16" preserveAspectRatio="none"><g fill="none" stroke="#000" stroke-width="1" stroke-linecap="square" vector-effect="non-scaling-stroke"><path transform="translate(0 0)" d="M4 6.5H12.5L10 9.5M8.5 8Q8.5 12 5 14.5"/></g></svg>
<svg class="a" style="left:1229.5px;top:969px;" width="8.5" height="12" viewBox="0 0 16 16" preserveAspectRatio="none"><g fill="none" stroke="#000" stroke-width="1" stroke-linecap="square" vector-effect="non-scaling-stroke"><path transform="translate(0 0)" d="M13.5 2Q8.5 8 2 10.5M9 6.5V15.5"/></g></svg>
<svg class="a" style="left:1238.0px;top:969px;" width="9" height="12" viewBox="0 0 16 16" preserveAspectRatio="none"><g fill="none" stroke="#000" stroke-width="1" stroke-linecap="square" vector-effect="non-scaling-stroke"><path transform="translate(0 0)" d="M5.5 3V8Q5.5 12 1.5 14.5M9.5 2V14L14.5 9.5"/></g></svg>
<div class="a ui" style="left:1249px;top:968px;color:#000">(5)</div>
</body></html>
